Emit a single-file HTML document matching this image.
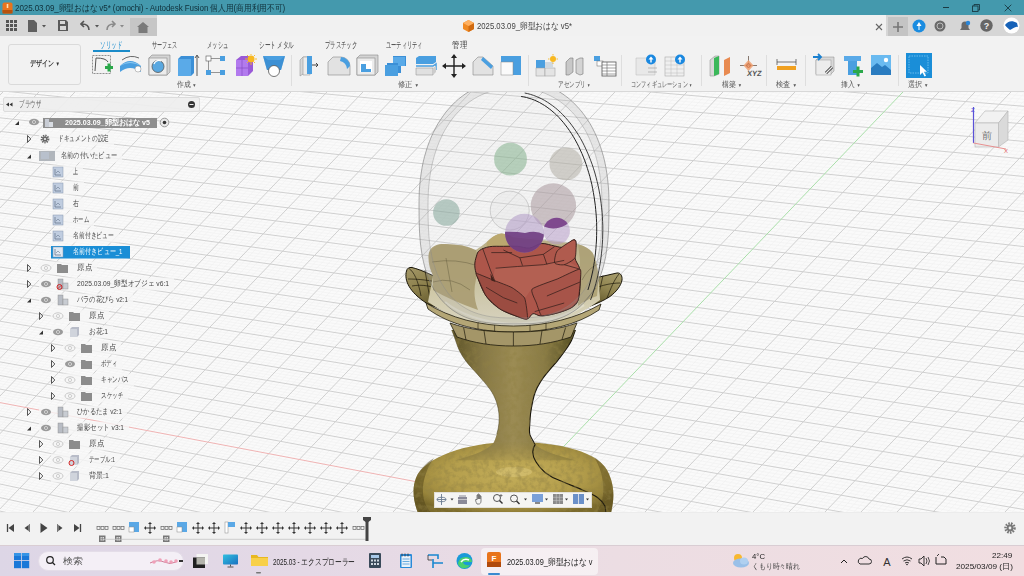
<!DOCTYPE html>
<html><head><meta charset="utf-8">
<style>
*{margin:0;padding:0;box-sizing:border-box}
html,body{width:1024px;height:576px;overflow:hidden;background:#f8f8f8;font-family:"Liberation Sans",sans-serif;color:#333}
.a{position:absolute}
.t{white-space:nowrap;line-height:1;transform-origin:0 0}
.j{letter-spacing:0}
</style></head><body>
<div class="a" style="left:0;top:91px;width:1024px;height:421px;background:#fafafa"></div>
<svg class="a" style="left:0;top:91px" width="1024" height="421" viewBox="0 91 1024 421">
<path d="M0 513.8L1024 740.9M0 508.4L1024 733.9M0 505.7L1024 730.4M0 503.0L1024 726.9M0 500.3L1024 723.4M0 494.8L1024 716.4M0 492.1L1024 712.9M0 489.4L1024 709.4M0 486.7L1024 705.9M0 481.3L1024 698.9M0 478.6L1024 695.4M0 475.9L1024 691.8M0 473.2L1024 688.3M0 467.7L1024 681.3M0 465.0L1024 677.8M0 462.3L1024 674.3M0 459.6L1024 670.8M0 454.2L1024 663.8M0 451.4L1024 660.3M0 448.7L1024 656.8M0 446.0L1024 653.3M0 440.6L1024 646.3M0 437.9L1024 642.8M0 435.2L1024 639.3M0 432.5L1024 635.8M0 427.0L1024 628.7M0 424.3L1024 625.2M0 421.6L1024 621.7M0 418.9L1024 618.2M0 413.5L1024 611.2M0 410.8L1024 607.7M0 408.0L1024 604.2M0 405.3L1024 600.7M0 399.9L1024 593.7M0 397.2L1024 590.2M0 394.5L1024 586.7M0 391.8L1024 583.2M0 386.3L1024 576.1M0 383.6L1024 572.6M0 380.9L1024 569.1M0 378.2L1024 565.6M0 372.8L1024 558.6M0 370.1L1024 555.1M0 367.4L1024 551.6M0 364.7L1024 548.1M0 359.2L1024 541.1M0 356.5L1024 537.6M0 353.8L1024 534.1M0 351.1L1024 530.6M0 345.7L1024 523.6M0 343.0L1024 520.1M0 340.2L1024 516.5M0 337.5L1024 513.0M0 332.1L1024 506.0M0 329.4L1024 502.5M0 326.7L1024 499.0M0 324.0L1024 495.5M0 318.5L1024 488.5M0 315.8L1024 485.0M0 313.1L1024 481.5M0 310.4L1024 478.0M0 305.0L1024 471.0M0 302.3L1024 467.5M0 299.5L1024 464.0M0 296.8L1024 460.4M0 291.4L1024 453.4M0 288.7L1024 449.9M0 286.0L1024 446.4M0 283.3L1024 442.9M0 277.8L1024 435.9M0 275.1L1024 432.4M0 272.4L1024 428.9M0 269.7L1024 425.4M0 264.3L1024 418.4M0 261.6L1024 414.9M0 258.9L1024 411.4M0 256.2L1024 407.9M0 250.7L1024 400.8M0 248.0L1024 397.3M0 245.3L1024 393.8M0 242.6L1024 390.3M0 237.2L1024 383.3M0 234.4L1024 379.8M0 231.7L1024 376.3M0 229.0L1024 372.8M0 223.6L1024 365.8M0 220.9L1024 362.3M0 218.2L1024 358.8M0 215.5L1024 355.3M0 210.0L1024 348.3M0 207.3L1024 344.7M0 204.6L1024 341.2M0 201.9L1024 337.7M0 196.5L1024 330.7M0 193.8L1024 327.2M0 191.1L1024 323.7M0 188.3L1024 320.2M0 182.9L1024 313.2M0 180.2L1024 309.7M0 177.5L1024 306.2M0 174.8L1024 302.7M0 169.4L1024 295.7M0 166.6L1024 292.2M0 163.9L1024 288.6M0 161.2L1024 285.1M0 155.8L1024 278.1M0 153.1L1024 274.6M0 150.4L1024 271.1M0 147.6L1024 267.6M0 142.2L1024 260.6M0 139.5L1024 257.1M0 136.8L1024 253.6M0 134.1L1024 250.1M0 128.7L1024 243.1M0 126.0L1024 239.6M0 123.2L1024 236.1M0 120.5L1024 232.6M0 115.1L1024 225.5M0 112.4L1024 222.0M0 109.7L1024 218.5M0 107.0L1024 215.0M0 101.5L1024 208.0M0 98.8L1024 204.5M0 96.1L1024 201.0M0 93.4L1024 197.5M0 88.0L1024 190.5M0 85.3L1024 187.0M0 82.5L1024 183.5M0 79.8L1024 180.0M0 74.4L1024 172.9M0 71.7L1024 169.4M0 69.0L1024 165.9M0 66.3L1024 162.4M0 60.9L1024 155.4M0 58.1L1024 151.9M0 55.4L1024 148.4M0 52.7L1024 144.9M0 47.3L1024 137.9M0 44.6L1024 134.4M0 41.9L1024 130.9M0 39.1L1024 127.4M0 33.7L1024 120.4M0 31.0L1024 116.8M0 28.3L1024 113.3M0 25.6L1024 109.8M0 20.2L1024 102.8M0 17.5L1024 99.3M0 14.7L1024 95.8M0 12.0L1024 92.3M11.1 91L-391.8 512M18.3 91L-384.6 512M25.5 91L-377.4 512M32.7 91L-370.2 512M47.1 91L-355.8 512M54.3 91L-348.6 512M61.5 91L-341.4 512M68.7 91L-334.2 512M83.1 91L-319.8 512M90.3 91L-312.6 512M97.5 91L-305.4 512M104.7 91L-298.2 512M119.1 91L-283.8 512M126.3 91L-276.6 512M133.5 91L-269.4 512M140.7 91L-262.2 512M155.1 91L-247.8 512M162.3 91L-240.6 512M169.5 91L-233.4 512M176.7 91L-226.2 512M191.1 91L-211.8 512M198.3 91L-204.6 512M205.5 91L-197.4 512M212.7 91L-190.2 512M227.1 91L-175.8 512M234.3 91L-168.6 512M241.5 91L-161.4 512M248.7 91L-154.2 512M263.1 91L-139.8 512M270.3 91L-132.6 512M277.5 91L-125.4 512M284.7 91L-118.2 512M299.1 91L-103.8 512M306.3 91L-96.6 512M313.5 91L-89.4 512M320.7 91L-82.2 512M335.1 91L-67.8 512M342.3 91L-60.6 512M349.5 91L-53.4 512M356.7 91L-46.2 512M371.1 91L-31.8 512M378.3 91L-24.6 512M385.5 91L-17.4 512M392.7 91L-10.2 512M407.1 91L4.2 512M414.3 91L11.4 512M421.5 91L18.6 512M428.7 91L25.8 512M443.1 91L40.2 512M450.3 91L47.4 512M457.5 91L54.6 512M464.7 91L61.8 512M479.1 91L76.2 512M486.3 91L83.4 512M493.5 91L90.6 512M500.7 91L97.8 512M515.1 91L112.2 512M522.3 91L119.4 512M529.5 91L126.6 512M536.7 91L133.8 512M551.1 91L148.2 512M558.3 91L155.4 512M565.5 91L162.6 512M572.7 91L169.8 512M587.1 91L184.2 512M594.3 91L191.4 512M601.5 91L198.6 512M608.7 91L205.8 512M623.1 91L220.2 512M630.3 91L227.4 512M637.5 91L234.6 512M644.7 91L241.8 512M659.1 91L256.2 512M666.3 91L263.4 512M673.5 91L270.6 512M680.7 91L277.8 512M695.1 91L292.2 512M702.3 91L299.4 512M709.5 91L306.6 512M716.7 91L313.8 512M731.1 91L328.2 512M738.3 91L335.4 512M745.5 91L342.6 512M752.7 91L349.8 512M767.1 91L364.2 512M774.3 91L371.4 512M781.5 91L378.6 512M788.7 91L385.8 512M803.1 91L400.2 512M810.3 91L407.4 512M817.5 91L414.6 512M824.7 91L421.8 512M839.1 91L436.2 512M846.3 91L443.4 512M853.5 91L450.6 512M860.7 91L457.8 512M875.1 91L472.2 512M882.3 91L479.4 512M889.5 91L486.6 512M896.7 91L493.8 512M911.1 91L508.2 512M918.3 91L515.4 512M925.5 91L522.6 512M932.7 91L529.8 512M947.1 91L544.2 512M954.3 91L551.4 512M961.5 91L558.6 512M968.7 91L565.8 512M983.1 91L580.2 512M990.3 91L587.4 512M997.5 91L594.6 512M1004.7 91L601.8 512M1019.1 91L616.2 512M1026.3 91L623.4 512M1033.5 91L630.6 512M1040.7 91L637.8 512M1055.1 91L652.2 512M1062.3 91L659.4 512M1069.5 91L666.6 512M1076.7 91L673.8 512M1091.1 91L688.2 512M1098.3 91L695.4 512M1105.5 91L702.6 512M1112.7 91L709.8 512M1127.1 91L724.2 512M1134.3 91L731.4 512M1141.5 91L738.6 512M1148.7 91L745.8 512M1163.1 91L760.2 512M1170.3 91L767.4 512M1177.5 91L774.6 512M1184.7 91L781.8 512M1199.1 91L796.2 512M1206.3 91L803.4 512M1213.5 91L810.6 512M1220.7 91L817.8 512M1235.1 91L832.2 512M1242.3 91L839.4 512M1249.5 91L846.6 512M1256.7 91L853.8 512M1271.1 91L868.2 512M1278.3 91L875.4 512M1285.5 91L882.6 512M1292.7 91L889.8 512M1307.1 91L904.2 512M1314.3 91L911.4 512M1321.5 91L918.6 512M1328.7 91L925.8 512M1343.1 91L940.2 512M1350.3 91L947.4 512M1357.5 91L954.6 512M1364.7 91L961.8 512M1379.1 91L976.2 512M1386.3 91L983.4 512M1393.5 91L990.6 512M1400.7 91L997.8 512M1415.1 91L1012.2 512M1422.3 91L1019.4 512" stroke="#f0f0f0" stroke-width="0.6" fill="none"/>
<path d="M0 511.1L1024 737.4M0 497.6L1024 719.9M0 484.0L1024 702.4M0 470.4L1024 684.8M0 456.9L1024 667.3M0 443.3L1024 649.8M0 429.8L1024 632.2M0 416.2L1024 614.7M0 389.1L1024 579.7M0 375.5L1024 562.1M0 361.9L1024 544.6M0 348.4L1024 527.1M0 334.8L1024 509.5M0 321.2L1024 492.0M0 307.7L1024 474.5M0 294.1L1024 456.9M0 280.6L1024 439.4M0 267.0L1024 421.9M0 253.4L1024 404.3M0 239.9L1024 386.8M0 226.3L1024 369.3M0 212.8L1024 351.8M0 199.2L1024 334.2M0 185.6L1024 316.7M0 172.1L1024 299.2M0 158.5L1024 281.6M0 144.9L1024 264.1M0 131.4L1024 246.6M0 117.8L1024 229.0M0 104.2L1024 211.5M0 90.7L1024 194.0M0 77.1L1024 176.5M0 63.6L1024 158.9M0 50.0L1024 141.4M0 36.4L1024 123.9M0 22.9L1024 106.3M3.9 91L-399.0 512M39.9 91L-363.0 512M75.9 91L-327.0 512M111.9 91L-291.0 512M147.9 91L-255.0 512M183.9 91L-219.0 512M219.9 91L-183.0 512M255.9 91L-147.0 512M291.9 91L-111.0 512M327.9 91L-75.0 512M363.9 91L-39.0 512M399.9 91L-3.0 512M435.9 91L33.0 512M471.9 91L69.0 512M507.9 91L105.0 512M543.9 91L141.0 512M579.9 91L177.0 512M615.9 91L213.0 512M651.9 91L249.0 512M687.9 91L285.0 512M723.9 91L321.0 512M759.9 91L357.0 512M795.9 91L393.0 512M831.9 91L429.0 512M867.9 91L465.0 512M939.9 91L537.0 512M975.9 91L573.0 512M1011.9 91L609.0 512M1047.9 91L645.0 512M1083.9 91L681.0 512M1119.9 91L717.0 512M1155.9 91L753.0 512M1191.9 91L789.0 512M1227.9 91L825.0 512M1263.9 91L861.0 512M1299.9 91L897.0 512M1335.9 91L933.0 512M1371.9 91L969.0 512M1407.9 91L1005.0 512" stroke="#d0d0d0" stroke-width="1" fill="none"/>
<path d="M903.9 91L501.0 512" stroke="#aadfaa" stroke-width="1" fill="none"/>
<path d="M0 402.6L1024 597.2" stroke="#f0b4b4" stroke-width="1" fill="none"/>
</svg>
<svg class="a" style="left:0;top:91px" width="1024" height="421" viewBox="0 91 1024 421">
<defs>
 <radialGradient id="gBase" cx="0.5" cy="0.45" r="0.6">
  <stop offset="0" stop-color="#c4ae5a"/>
  <stop offset="0.55" stop-color="#b49e4c"/>
  <stop offset="0.85" stop-color="#9a863c"/>
  <stop offset="1" stop-color="#7a6a2c"/>
 </radialGradient>
 <filter id="fNoise" x="0" y="0" width="1" height="1" filterUnits="objectBoundingBox">
  <feTurbulence type="fractalNoise" baseFrequency="0.18" numOctaves="3" seed="7" result="n"/>
  <feColorMatrix in="n" type="matrix" values="0 0 0 0 0.28  0 0 0 0 0.22  0 0 0 0 0.06  0 0 0 -3 1.75"/>
 </filter>
 <linearGradient id="gMaskStem" x1="0" x2="0" y1="442" y2="468" gradientUnits="userSpaceOnUse">
  <stop offset="0" stop-color="#fff"/>
  <stop offset="1" stop-color="#000"/>
 </linearGradient>
 <mask id="mStem" maskUnits="userSpaceOnUse" x="400" y="300" width="230" height="220"><rect x="400" y="300" width="230" height="220" fill="url(#gMaskStem)"/></mask>
 <clipPath id="cGold">
  <path d="M418 513 C413 500 412 488 416 478 C425 456 470 442 514 442 C560 442 601 452 609 474 C615 488 614 500 611 513 Z"/>
  <path d="M451.7 330.0C452.4 331.7 454.3 336.9 455.6 340.4C456.9 343.9 457.8 347.4 459.5 350.8C461.3 354.3 463.4 357.8 466.0 361.2C468.6 364.7 472.1 368.2 475.2 371.7C478.2 375.1 481.4 378.6 484.3 382.1C487.1 385.6 490.0 389.0 492.1 392.5C494.2 396.0 495.6 399.4 496.8 402.9C497.9 406.4 498.5 409.9 498.9 413.3C499.2 416.8 499.2 420.3 498.9 423.8C498.5 427.2 497.9 430.7 496.8 434.2C495.6 437.6 495.0 441.5 492.1 444.6C489.1 447.6 485.1 449.8 479.1 452.4C473.0 455.0 459.5 458.9 455.6 460.2L575.4 460.2C571.1 458.9 556.1 455.0 549.4 452.4C542.6 449.8 538.3 447.6 535.1 444.6C531.8 441.5 530.7 437.6 529.8 434.2C529.0 430.7 529.7 427.2 529.8 423.8C530.0 420.3 530.2 416.8 530.6 413.3C531.1 409.9 531.7 406.4 532.4 402.9C533.2 399.4 533.8 396.0 535.1 392.5C536.4 389.0 538.1 385.6 540.3 382.1C542.4 378.6 545.3 375.1 548.1 371.7C550.9 368.2 554.4 364.7 557.2 361.2C560.0 357.8 562.6 354.3 565.0 350.8C567.4 347.4 569.8 343.9 571.5 340.4C573.2 336.9 574.8 331.7 575.4 330.0Z"/>
 </clipPath>
 <linearGradient id="gStem" x1="452" x2="574" y1="0" y2="0" gradientUnits="userSpaceOnUse">
  <stop offset="0" stop-color="#5e5428"/>
  <stop offset="0.25" stop-color="#867846"/>
  <stop offset="0.5" stop-color="#9c8c54"/>
  <stop offset="0.75" stop-color="#8a7c46"/>
  <stop offset="1" stop-color="#565024"/>
 </linearGradient>
 <linearGradient id="gFlare" x1="0" x2="0" y1="430" y2="476" gradientUnits="userSpaceOnUse">
  <stop offset="0" stop-color="#b8a050" stop-opacity="0"/>
  <stop offset="1" stop-color="#c4ac56" stop-opacity="1"/>
 </linearGradient>
 <linearGradient id="gCup" x1="0" x2="0" y1="0" y2="1">
  <stop offset="0" stop-color="#b4a466"/>
  <stop offset="1" stop-color="#8a7a40"/>
 </linearGradient>
 <linearGradient id="gPetalL" x1="0" x2="0.5" y1="0" y2="1">
  <stop offset="0" stop-color="#a49868"/>
  <stop offset="0.5" stop-color="#8a7e4a"/>
  <stop offset="1" stop-color="#5a5026"/>
 </linearGradient>
 <linearGradient id="gPetalR" x1="1" x2="0.5" y1="0" y2="1">
  <stop offset="0" stop-color="#aaa070"/>
  <stop offset="0.5" stop-color="#908450"/>
  <stop offset="1" stop-color="#5e5428"/>
 </linearGradient>
 <linearGradient id="gDish" x1="0" x2="0" y1="0" y2="1">
  <stop offset="0" stop-color="#b8ac80"/>
  <stop offset="0.5" stop-color="#ccc4a0"/>
  <stop offset="1" stop-color="#dcd8c4"/>
 </linearGradient>
 <radialGradient id="gRose" cx="0.45" cy="0.4" r="0.6">
  <stop offset="0" stop-color="#c05a4a"/>
  <stop offset="1" stop-color="#a84c3e"/>
 </radialGradient>
</defs>
<!-- BASE -->
<path d="M418 513 C413 500 412 488 416 478 C425 456 470 442 514 442 C560 442 601 452 609 474 C615 488 614 500 611 513 Z" fill="url(#gBase)"/>
<path d="M418 513 C413 500 412 488 416 478 C419 470 426 463 434 458 C424 472 421 488 424 500 C426 507 429 511 432 513 Z" fill="#4e4218" opacity="0.5"/>
<path d="M611 513 C614 500 615 488 609 474 C606 467 600 461 594 457 C603 471 605 488 602 500 C600 507 598 511 596 513 Z" fill="#4e4218" opacity="0.4"/>
<!-- STEM -->
<path d="M451.7 330.0C452.4 331.7 454.3 336.9 455.6 340.4C456.9 343.9 457.8 347.4 459.5 350.8C461.3 354.3 463.4 357.8 466.0 361.2C468.6 364.7 472.1 368.2 475.2 371.7C478.2 375.1 481.4 378.6 484.3 382.1C487.1 385.6 490.0 389.0 492.1 392.5C494.2 396.0 495.6 399.4 496.8 402.9C497.9 406.4 498.5 409.9 498.9 413.3C499.2 416.8 499.2 420.3 498.9 423.8C498.5 427.2 497.9 430.7 496.8 434.2C495.6 437.6 495.0 441.5 492.1 444.6C489.1 447.6 485.1 449.8 479.1 452.4C473.0 455.0 459.5 458.9 455.6 460.2L575.4 460.2C571.1 458.9 556.1 455.0 549.4 452.4C542.6 449.8 538.3 447.6 535.1 444.6C531.8 441.5 530.7 437.6 529.8 434.2C529.0 430.7 529.7 427.2 529.8 423.8C530.0 420.3 530.2 416.8 530.6 413.3C531.1 409.9 531.7 406.4 532.4 402.9C533.2 399.4 533.8 396.0 535.1 392.5C536.4 389.0 538.1 385.6 540.3 382.1C542.4 378.6 545.3 375.1 548.1 371.7C550.9 368.2 554.4 364.7 557.2 361.2C560.0 357.8 562.6 354.3 565.0 350.8C567.4 347.4 569.8 343.9 571.5 340.4C573.2 336.9 574.8 331.7 575.4 330.0Z" fill="url(#gStem)" mask="url(#mStem)"/>
<ellipse cx="514" cy="472" rx="18" ry="5" fill="#e0cc80" opacity="0.45"/>
<path d="M451.7 330.0C452.4 331.7 454.3 336.9 455.6 340.4C456.9 343.9 457.8 347.4 459.5 350.8C461.3 354.3 463.4 357.8 466.0 361.2C468.6 364.7 472.1 368.2 475.2 371.7C478.2 375.1 481.4 378.6 484.3 382.1C487.1 385.6 490.0 389.0 492.1 392.5C494.2 396.0 495.6 399.4 496.8 402.9C497.9 406.4 498.5 409.9 498.9 413.3C499.2 416.8 499.2 420.3 498.9 423.8C498.5 427.2 497.9 430.7 496.8 434.2" stroke="#3a3214" stroke-width="0.8" fill="none" opacity="0.6"/>
<path d="M575.4 330.0C574.8 331.7 573.2 336.9 571.5 340.4C569.8 343.9 567.4 347.4 565.0 350.8C562.6 354.3 560.0 357.8 557.2 361.2C554.4 364.7 550.9 368.2 548.1 371.7C545.3 375.1 542.4 378.6 540.3 382.1C538.1 385.6 536.4 389.0 535.1 392.5C533.8 396.0 533.2 399.4 532.4 402.9C531.7 406.4 531.1 409.9 530.6 413.3C530.2 416.8 530.0 420.3 529.8 423.8C529.7 427.2 529.0 430.7 529.8 434.2C530.7 437.6 534.2 442.8 535.1 444.6C530 452 534 462 545 472.5 C552 478 558 480 561 481 C570 485 576 487 582.5 490 C590 493 594 495 597.5 497.5 C602 501 604 504 605 506 L606 513" stroke="#1a160c" stroke-width="1.1" fill="none"/>
<rect x="405" y="325" width="215" height="190" filter="url(#fNoise)" clip-path="url(#cGold)" opacity="0.45"/>
<!-- OUTER PETALS -->
<path d="M406.5 271 C404 280 409 292 427 303.5 L450 313 L446 282 C434 276 422 270 412 267.5 C409 267 407 268.5 406.5 271 Z" fill="url(#gPetalL)" stroke="#1a160a" stroke-width="1"/>
<path d="M409 268.5 C414 272 418 280 421 296 M412 286 C422 284 434 286 444 292 M425 270.5 L430 299 M408 279 C418 279 430 280 445 284" stroke="#1e1a0c" stroke-width="0.7" fill="none"/>
<path d="M586 280 L617 273 C620.5 272.5 622.5 276 622 280 C621 286 616 292 610 296.5 C604 300.5 597 303.5 588 307 L580 308 Z" fill="url(#gPetalR)" stroke="#1a160a" stroke-width="1"/>
<path d="M619 274 C614 280 611 288 607 298 M620 283 C610 283 598 286 586 292 M603 275.5 L597 302" stroke="#1e1a0c" stroke-width="0.7" fill="none"/>
<!-- DISH (inner petals) -->
<path d="M428 302 L433 275.6 Q428 262 429 252.7 Q434 245 441.7 244.3 L462.5 245.4 Q470 247 475 250.6 Q485 244 489.5 239.5 Q496 234 501.7 233.5 Q508 234 512 237 L560 242 Q570 243 578 244.3 Q588 247 592.5 252.7 Q597 262 598.75 277.7 L600 300 Q560 330 514 330 Q468 330 428 302z" fill="url(#gDish)"/>
<path d="M428.5 256 C429 248 434 244.5 442 244 C455 243.5 466 245.5 476 250 L480 268 Q470 290 478 310 Q450 300 433 290 L433 275.6 Q428 266 428.5 256z" fill="#a89a6c" opacity="0.9"/>
<path d="M487 242 Q494 234 501.7 233.5 Q510 234 514 239 L512 250 L486 250z" fill="#bca86a"/>
<path d="M578 244.3 Q588 247 592.5 252.7 Q597 262 598.75 277.7 L597 296 Q585 300 578 306 L580 260z" fill="#aa9e70" opacity="0.85"/>
<path d="M432 262 Q456 258 478 266 M446 258 L452 292 M433 282 Q452 276 470 290 M598 264 Q588 268 582 280 M596 288 L584 302" stroke="#5e5636" stroke-width="0.6" fill="none" opacity="0.8"/>
<path d="M445 302 Q470 322 514 324 Q560 322 584 305" stroke="#f0f0e8" stroke-width="2.2" fill="none" opacity="0.4"/>
<!-- FLANGE + BAND -->
<path d="M426 303 C450 318 480 326 513.5 326 C547 326 577 318 601 304 L599 310 C577 325 547 332 513.5 332 C480 332 450 325 428 309 Z" fill="#b4a676" stroke="#1e1a0c" stroke-width="0.8"/>
<path d="M478 322.5v8M494.6 325v6.5M530 325v6.5M546 322.5v8" stroke="#1e1a0c" stroke-width="0.6"/>
<path d="M450 323 C470 330 490 332 513.5 332 C537 332 557 330 577 323 L571 337 C553 343 535 346 513.5 346 C492 346 474 343 457 337 Z" fill="#a49668" stroke="#1e1a0c" stroke-width="0.8"/>
<path d="M463.6 327.5L466 340M484 330.5L486 344M513.4 332V346M542 330.5L540 344M565.6 327.5L562 339.5" stroke="#1e1a0c" stroke-width="0.7"/>
<!-- ROSE -->
<path d="M476.5 256.1C475.7 258.6 474.6 262.1 474.8 265.6C474.9 269.1 475.5 271.8 477.4 276.9C479.3 282.0 482.3 290.7 486.1 296.0C489.8 301.4 494.7 305.6 500.0 309.0C505.2 312.5 512.7 314.9 517.3 316.5C521.9 318.2 524.8 319.4 527.4 318.9C530.0 318.5 530.6 314.2 533.0 313.7C535.3 313.2 537.6 316.1 541.6 316.0C545.7 315.9 552.4 314.4 557.3 313.0C562.2 311.7 567.7 309.9 571.2 307.8C574.6 305.7 576.6 304.6 578.1 300.3C579.6 296.1 580.0 287.5 580.2 282.1C580.4 276.8 580.4 272.3 579.5 268.2C578.6 264.2 575.6 262.1 575.0 257.8C574.4 253.5 576.4 245.5 576.0 242.5C575.7 239.6 575.0 239.3 572.9 240.1C570.8 240.8 566.4 246.0 563.4 247.0C560.3 248.0 558.3 246.6 554.7 246.0C551.0 245.4 545.8 243.2 541.6 243.5C537.4 243.9 533.5 247.6 529.5 248.1C525.4 248.5 521.7 246.6 517.3 246.3C513.0 246.0 508.1 246.3 503.4 246.3C498.8 246.4 493.5 246.0 489.5 246.7C485.5 247.4 481.6 248.9 479.5 250.5C477.3 252.1 477.3 253.5 476.5 256.1Z" fill="#ad4f42" stroke="#2a120e" stroke-width="1"/>
<path d="M494.7 280.7C493.4 279.1 493.7 269.4 495.6 268.2C497.5 267.0 513.3 266.8 517.3 266.5C521.3 266.2 539.5 265.2 543.4 264.7C547.3 264.2 561.2 260.0 564.2 260.4C567.3 260.8 580.4 267.5 579.9 269.1C579.3 270.6 561.3 277.3 557.3 279.0C553.3 280.6 534.8 287.5 532.1 289.1C529.4 290.7 526.3 298.2 524.6 298.1C523.0 298.0 514.6 289.1 512.1 287.7C509.6 286.2 496.1 282.3 494.7 280.7Z" fill="#b55a4b" opacity="0.9"/>
<path d="M476.5 273.4C477.9 273.7 491.8 279.5 494.7 280.7C497.7 281.9 509.6 286.2 512.1 287.7C514.6 289.1 523.3 295.5 524.6 298.1C525.9 300.7 528.0 317.4 527.4 318.9C526.8 320.5 519.6 317.3 517.3 316.5C515.0 315.7 502.6 310.7 500.0 309.0C497.3 307.3 487.9 298.7 486.1 296.0C484.2 293.3 478.2 278.8 477.4 276.9C476.6 275.0 475.1 273.1 476.5 273.4Z" fill="#9a4438" stroke="#2a120e" stroke-width="0.8"/>
<path d="M532.1 289.1C533.8 287.1 553.3 280.6 557.3 279.0C561.3 277.3 577.9 268.8 579.9 269.1C581.8 269.3 580.3 279.5 580.2 282.1C580.1 284.7 578.9 298.2 578.1 300.3C577.4 302.5 572.9 306.8 571.2 307.8C569.4 308.9 559.7 312.4 557.3 313.0C554.8 313.7 543.4 316.3 541.6 315.5C539.9 314.6 537.2 305.2 536.4 303.0C535.6 300.8 530.3 291.1 532.1 289.1Z" fill="#a64c40" stroke="#2a120e" stroke-width="0.8"/>
<path d="M557.3 250.8C559.1 248.6 571.0 240.9 572.9 240.1C574.8 239.2 575.8 240.7 576.0 242.5C576.2 244.3 576.2 255.6 575.0 257.8C573.8 260.0 566.3 264.2 564.2 264.7C562.2 265.3 555.4 264.4 554.7 263.0C554.0 261.6 555.4 253.1 557.3 250.8Z" fill="#b05446" stroke="#2a120e" stroke-width="0.8"/>
<path d="M482.6 248.2L490.4 270.0L494.7 280.7" stroke="#2e1410" stroke-width="0.75" fill="none"/>
<path d="M503.4 250.0L519.9 257.8L543.4 254.3L554.7 246.5" stroke="#2e1410" stroke-width="0.75" fill="none"/>
<path d="M495.6 268.2L517.3 266.5L543.4 264.7L564.2 260.4" stroke="#2e1410" stroke-width="0.75" fill="none"/>
<path d="M519.9 257.8L522.5 265.6" stroke="#2e1410" stroke-width="0.75" fill="none"/>
<path d="M543.4 254.3L546.9 264.4" stroke="#2e1410" stroke-width="0.75" fill="none"/>
<path d="M486.1 287.3L503.4 297.7L517.3 303.0" stroke="#2e1410" stroke-width="0.75" fill="none"/>
<path d="M546.9 296.0L579.9 282.1" stroke="#2e1410" stroke-width="0.75" fill="none"/>
<path d="M491.3 252.6L512.1 252.6" stroke="#2e1410" stroke-width="0.75" fill="none"/>
<path d="M534.7 311.6L564.2 303.0" stroke="#2e1410" stroke-width="0.75" fill="none"/>
<path d="M564.2 264.7L579.9 269.1" stroke="#2e1410" stroke-width="0.75" fill="none"/>
<path d="M490.4 273.4L495.6 282.1L491.3 280.4Z" fill="#3a1810"/>
<!-- SPHERES -->
<clipPath id="cMauve"><circle cx="553.4" cy="205.9" r="22.7"/></clipPath>
<clipPath id="cPurp"><circle cx="524.5" cy="233.3" r="19.5"/></clipPath>
<circle cx="510.5" cy="159.2" r="16.4" fill="#80b088" opacity="0.55"/>
<circle cx="565.9" cy="163.9" r="16.4" fill="#aca89c" opacity="0.5"/>
<circle cx="446.4" cy="212.5" r="13.3" fill="#80a498" opacity="0.55"/>
<circle cx="509.7" cy="210.6" r="19.5" fill="#e0e0e0" fill-opacity="0.25" stroke="#b8b8b8" stroke-width="0.8" stroke-opacity="0.8"/>
<circle cx="553.4" cy="205.9" r="22.7" fill="#a8969a" opacity="0.55"/>
<circle cx="556.6" cy="231" r="13.3" fill="#b89ccc" opacity="0.55"/>
<circle cx="556.6" cy="231" r="13.3" fill="#6e2e80" opacity="0.85" clip-path="url(#cMauve)"/>
<circle cx="524.5" cy="233.3" r="19.5" fill="#b098c8" opacity="0.55"/>
<path d="M500 232 Q515 231 525 233 Q540 229 548 238 L548 256 L500 256z" fill="#642a78" opacity="0.85" clip-path="url(#cPurp)"/>
<!-- DOME -->
<path d="M609.0 205.0L608.9 218.0L608.7 226.2L608.4 233.4L607.9 239.8L607.3 245.7L606.5 251.2L605.7 256.4L604.6 261.4L603.5 266.1L602.2 270.5L600.8 274.8L599.2 278.9L597.5 282.7L595.7 286.4L593.7 289.9L591.6 293.2L589.3 296.4L587.0 299.4L584.4 302.2L581.8 304.8L579.0 307.3L576.1 309.6L573.0 311.7L569.7 313.7L566.3 315.5L562.8 317.1L559.0 318.5L555.1 319.8L550.9 320.9L546.5 321.9L541.8 322.6L536.6 323.2L531.0 323.7L524.3 323.9L514.0 324.0L503.7 323.9L497.0 323.7L491.4 323.2L486.2 322.6L481.5 321.9L477.1 320.9L472.9 319.8L469.0 318.5L465.2 317.1L461.7 315.5L458.3 313.7L455.0 311.7L451.9 309.6L449.0 307.3L446.2 304.8L443.6 302.2L441.0 299.4L438.7 296.4L436.4 293.2L434.3 289.9L432.3 286.4L430.5 282.7L428.8 278.9L427.2 274.8L425.8 270.5L424.5 266.1L423.4 261.4L422.3 256.4L421.5 251.2L420.7 245.7L420.1 239.8L419.6 233.4L419.3 226.2L419.1 218.0L419.0 205.0L419.1 197.6L419.3 191.0L419.8 184.9L420.4 178.9L421.2 173.1L422.1 167.5L423.2 162.0L424.5 156.7L426.0 151.5L427.6 146.5L429.4 141.6L431.3 136.9L433.4 132.3L435.6 127.9L438.0 123.6L440.6 119.6L443.3 115.7L446.1 111.9L449.1 108.4L452.2 105.1L455.4 101.9L458.7 98.9L462.2 96.2L465.8 93.6L469.5 91.3L473.4 89.2L477.3 87.3L481.3 85.6L485.5 84.1L489.8 82.9L494.2 81.8L498.7 81.0L503.4 80.5L508.3 80.1L514.0 80.0L519.7 80.1L524.6 80.5L529.3 81.0L533.8 81.8L538.2 82.9L542.5 84.1L546.7 85.6L550.7 87.3L554.6 89.2L558.5 91.3L562.2 93.6L565.8 96.2L569.3 98.9L572.6 101.9L575.8 105.1L578.9 108.4L581.9 111.9L584.7 115.7L587.4 119.6L590.0 123.6L592.4 127.9L594.6 132.3L596.7 136.9L598.6 141.6L600.4 146.5L602.0 151.5L603.5 156.7L604.8 162.0L605.9 167.5L606.8 173.1L607.6 178.9L608.2 184.9L608.7 191.0L608.9 197.6L609.0 205.0ZM602.0 206.0L601.9 217.2L601.7 224.8L601.4 231.3L601.0 237.3L600.4 242.8L599.7 248.0L598.8 252.9L597.9 257.6L596.8 262.1L595.5 266.3L594.2 270.4L592.7 274.3L591.1 278.0L589.4 281.6L587.5 284.9L585.5 288.1L583.4 291.2L581.2 294.1L578.8 296.8L576.3 299.3L573.7 301.7L570.9 304.0L568.1 306.0L565.0 307.9L561.9 309.7L558.6 311.3L555.1 312.7L551.5 313.9L547.6 315.0L543.6 315.9L539.3 316.7L534.7 317.2L529.6 317.7L523.7 317.9L515.0 318.0L506.3 317.9L500.4 317.7L495.3 317.2L490.7 316.7L486.4 315.9L482.4 315.0L478.5 313.9L474.9 312.7L471.4 311.3L468.1 309.7L465.0 307.9L461.9 306.0L459.1 304.0L456.3 301.7L453.7 299.3L451.2 296.8L448.8 294.1L446.6 291.2L444.5 288.1L442.5 284.9L440.6 281.6L438.9 278.0L437.3 274.3L435.8 270.4L434.5 266.3L433.2 262.1L432.1 257.6L431.2 252.9L430.3 248.0L429.6 242.8L429.0 237.3L428.6 231.3L428.3 224.8L428.1 217.2L428.0 206.0L428.1 199.0L428.3 192.8L428.7 187.0L429.3 181.4L430.0 175.9L430.9 170.6L431.9 165.4L433.1 160.4L434.4 155.5L435.9 150.8L437.5 146.2L439.3 141.7L441.2 137.4L443.2 133.2L445.4 129.2L447.8 125.4L450.2 121.7L452.8 118.2L455.5 114.8L458.4 111.7L461.3 108.7L464.4 105.9L467.6 103.3L470.9 100.9L474.3 98.7L477.8 96.7L481.4 94.9L485.1 93.3L488.9 91.9L492.8 90.7L496.8 89.7L501.0 89.0L505.3 88.4L509.8 88.1L515.0 88.0L520.2 88.1L524.7 88.4L529.0 89.0L533.2 89.7L537.2 90.7L541.1 91.9L544.9 93.3L548.6 94.9L552.2 96.7L555.7 98.7L559.1 100.9L562.4 103.3L565.6 105.9L568.7 108.7L571.6 111.7L574.5 114.8L577.2 118.2L579.8 121.7L582.2 125.4L584.6 129.2L586.8 133.2L588.8 137.4L590.7 141.7L592.5 146.2L594.1 150.8L595.6 155.5L596.9 160.4L598.1 165.4L599.1 170.6L600.0 175.9L600.7 181.4L601.3 187.0L601.7 192.8L601.9 199.0L602.0 206.0Z" fill="#a0a0a0" fill-opacity="0.16" fill-rule="evenodd"/>
<path d="M609.0 205.0L608.9 218.0L608.7 226.2L608.4 233.4L607.9 239.8L607.3 245.7L606.5 251.2L605.7 256.4L604.6 261.4L603.5 266.1L602.2 270.5L600.8 274.8L599.2 278.9L597.5 282.7L595.7 286.4L593.7 289.9L591.6 293.2L589.3 296.4L587.0 299.4L584.4 302.2L581.8 304.8L579.0 307.3L576.1 309.6L573.0 311.7L569.7 313.7L566.3 315.5L562.8 317.1L559.0 318.5L555.1 319.8L550.9 320.9L546.5 321.9L541.8 322.6L536.6 323.2L531.0 323.7L524.3 323.9L514.0 324.0L503.7 323.9L497.0 323.7L491.4 323.2L486.2 322.6L481.5 321.9L477.1 320.9L472.9 319.8L469.0 318.5L465.2 317.1L461.7 315.5L458.3 313.7L455.0 311.7L451.9 309.6L449.0 307.3L446.2 304.8L443.6 302.2L441.0 299.4L438.7 296.4L436.4 293.2L434.3 289.9L432.3 286.4L430.5 282.7L428.8 278.9L427.2 274.8L425.8 270.5L424.5 266.1L423.4 261.4L422.3 256.4L421.5 251.2L420.7 245.7L420.1 239.8L419.6 233.4L419.3 226.2L419.1 218.0L419.0 205.0L419.1 197.6L419.3 191.0L419.8 184.9L420.4 178.9L421.2 173.1L422.1 167.5L423.2 162.0L424.5 156.7L426.0 151.5L427.6 146.5L429.4 141.6L431.3 136.9L433.4 132.3L435.6 127.9L438.0 123.6L440.6 119.6L443.3 115.7L446.1 111.9L449.1 108.4L452.2 105.1L455.4 101.9L458.7 98.9L462.2 96.2L465.8 93.6L469.5 91.3L473.4 89.2L477.3 87.3L481.3 85.6L485.5 84.1L489.8 82.9L494.2 81.8L498.7 81.0L503.4 80.5L508.3 80.1L514.0 80.0L519.7 80.1L524.6 80.5L529.3 81.0L533.8 81.8L538.2 82.9L542.5 84.1L546.7 85.6L550.7 87.3L554.6 89.2L558.5 91.3L562.2 93.6L565.8 96.2L569.3 98.9L572.6 101.9L575.8 105.1L578.9 108.4L581.9 111.9L584.7 115.7L587.4 119.6L590.0 123.6L592.4 127.9L594.6 132.3L596.7 136.9L598.6 141.6L600.4 146.5L602.0 151.5L603.5 156.7L604.8 162.0L605.9 167.5L606.8 173.1L607.6 178.9L608.2 184.9L608.7 191.0L608.9 197.6L609.0 205.0Z" fill="#b8b8b8" fill-opacity="0.08" stroke="#7a7a7a" stroke-width="1" stroke-opacity="0.6"/>
<path d="M602.0 206.0L601.9 217.2L601.7 224.8L601.4 231.3L601.0 237.3L600.4 242.8L599.7 248.0L598.8 252.9L597.9 257.6L596.8 262.1L595.5 266.3L594.2 270.4L592.7 274.3L591.1 278.0L589.4 281.6L587.5 284.9L585.5 288.1L583.4 291.2L581.2 294.1L578.8 296.8L576.3 299.3L573.7 301.7L570.9 304.0L568.1 306.0L565.0 307.9L561.9 309.7L558.6 311.3L555.1 312.7L551.5 313.9L547.6 315.0L543.6 315.9L539.3 316.7L534.7 317.2L529.6 317.7L523.7 317.9L515.0 318.0L506.3 317.9L500.4 317.7L495.3 317.2L490.7 316.7L486.4 315.9L482.4 315.0L478.5 313.9L474.9 312.7L471.4 311.3L468.1 309.7L465.0 307.9L461.9 306.0L459.1 304.0L456.3 301.7L453.7 299.3L451.2 296.8L448.8 294.1L446.6 291.2L444.5 288.1L442.5 284.9L440.6 281.6L438.9 278.0L437.3 274.3L435.8 270.4L434.5 266.3L433.2 262.1L432.1 257.6L431.2 252.9L430.3 248.0L429.6 242.8L429.0 237.3L428.6 231.3L428.3 224.8L428.1 217.2L428.0 206.0L428.1 199.0L428.3 192.8L428.7 187.0L429.3 181.4L430.0 175.9L430.9 170.6L431.9 165.4L433.1 160.4L434.4 155.5L435.9 150.8L437.5 146.2L439.3 141.7L441.2 137.4L443.2 133.2L445.4 129.2L447.8 125.4L450.2 121.7L452.8 118.2L455.5 114.8L458.4 111.7L461.3 108.7L464.4 105.9L467.6 103.3L470.9 100.9L474.3 98.7L477.8 96.7L481.4 94.9L485.1 93.3L488.9 91.9L492.8 90.7L496.8 89.7L501.0 89.0L505.3 88.4L509.8 88.1L515.0 88.0L520.2 88.1L524.7 88.4L529.0 89.0L533.2 89.7L537.2 90.7L541.1 91.9L544.9 93.3L548.6 94.9L552.2 96.7L555.7 98.7L559.1 100.9L562.4 103.3L565.6 105.9L568.7 108.7L571.6 111.7L574.5 114.8L577.2 118.2L579.8 121.7L582.2 125.4L584.6 129.2L586.8 133.2L588.8 137.4L590.7 141.7L592.5 146.2L594.1 150.8L595.6 155.5L596.9 160.4L598.1 165.4L599.1 170.6L600.0 175.9L600.7 181.4L601.3 187.0L601.7 192.8L601.9 199.0L602.0 206.0Z" fill="none" stroke="#8a8a8a" stroke-width="0.8" stroke-opacity="0.5"/>
<path d="M521.1 96.5L523.8 96.9L526.5 97.5L529.1 98.3L531.8 99.1L534.4 100.1L537.0 101.3L539.5 102.5L542.1 104.0L544.6 105.5L547.1 107.2L549.5 109.0L551.9 110.9L554.3 113.0L556.6 115.1L558.9 117.4L561.1 119.9L563.3 122.4L565.4 125.1L567.5 127.8L569.5 130.7L571.5 133.7L573.4 136.7L575.2 139.9L577.0 143.2L578.7 146.5L580.3 150.0L581.9 153.5L583.4 157.1L584.8 160.8L586.2 164.6L587.4 168.4L588.6 172.3L589.8 176.3L590.8 180.3L591.8 184.3L592.6 188.5L593.4 192.6L594.1 196.8L594.7 201.0L595.3 205.3L595.7 209.6L596.1 213.9L596.4 218.2L596.6 222.6L596.7 226.9L596.7 231.3L596.6 235.6L596.5 240.0L596.2 244.3L595.9 248.6L595.5 252.9L595.0 257.2L594.4 261.5L593.7 265.7L593.0 269.8L592.1 274.0L591.2 278.1L590.2 282.1L589.1 286.1L587.9 290.0" stroke="#222" stroke-width="1" fill="none"/>
<path d="M524.7 93.0L527.6 93.6L530.5 94.4L533.3 95.3L536.2 96.4L539.0 97.6L541.8 98.9L544.6 100.4L547.3 102.1L550.0 103.9L552.7 105.8L555.3 107.8L557.9 110.0L560.4 112.3L562.9 114.8L565.3 117.4L567.7 120.1L570.0 122.9L572.2 125.8L574.4 128.9L576.5 132.0L578.6 135.3L580.6 138.6L582.5 142.1L584.3 145.7L586.0 149.3L587.7 153.1L589.3 156.9L590.8 160.8L592.3 164.8L593.6 168.8L594.9 173.0L596.0 177.1L597.1 181.4L598.1 185.7L599.0 190.0L599.8 194.4L600.5 198.8L601.1 203.3L601.6 207.8L602.1 212.3L602.4 216.8L602.6 221.4L602.8 225.9L602.8 230.5L602.7 235.0L602.6 239.6L602.3 244.1L602.0 248.6L601.5 253.2L601.0 257.6L600.4 262.1L599.6 266.5L598.8 270.9L597.9 275.2L596.9 279.5L595.8 283.7L594.6 287.9L593.3 292.0L592.0 296.0L590.5 300.0" stroke="#2a2a2a" stroke-width="0.9" fill="none"/>
</svg>

<!-- NAV BAR -->
<div class="a" style="left:434px;top:492px;width:158px;height:16px;background:#f5f5f3;border:1px solid #e2e0d8"></div>
<svg class="a" style="left:434px;top:492px" width="158" height="16" viewBox="434 492 158 16">
 <g stroke="#6a7a90" fill="none" stroke-width="0.9">
  <path d="M441.5 494v11M437 499.5h9"/><ellipse cx="441.5" cy="499.5" rx="4.5" ry="2.2"/>
 </g>
 <g fill="#333"><path d="M450.5 498.5h3l-1.5 2z"/><path d="M524 498.5h3l-1.5 2z"/><path d="M545 498.5h3l-1.5 2z"/><path d="M565 498.5h3l-1.5 2z"/><path d="M586 498.5h3l-1.5 2z"/></g>
 <path d="M458 497h9v7h-9z" fill="#8a8a98"/><path d="M459 496h7" stroke="#8a8a98" stroke-width="1"/><path d="M458 499.5h9" stroke="#ddd" stroke-width="0.7"/>
 <path d="M477 504c-1-2-2-4-1-5l1 1v-5h1v4v-5h1v5v-4h1v4v-3h1v5c0 2-1 3-2 3z" fill="none" stroke="#666" stroke-width="0.8"/>
 <circle cx="497" cy="498" r="3.5" fill="none" stroke="#555" stroke-width="1"/><path d="M499.5 500.5l3 3" stroke="#333" stroke-width="1.4"/><path d="M501 494v3M499.5 495.5h3" stroke="#555" stroke-width="0.7"/>
 <circle cx="514" cy="498.5" r="3.5" fill="none" stroke="#555" stroke-width="1"/><path d="M516.5 501l3 3" stroke="#333" stroke-width="1.4"/>
 <rect x="532" y="494" width="11" height="8" fill="#7aa0d8"/><path d="M535 502h5v2h-5z" fill="#888"/>
 <rect x="553" y="494" width="10" height="10" fill="#8a8a8a"/><path d="M556.3 494v10M559.6 494v10M553 497.3h10M553 500.6h10" stroke="#ccc" stroke-width="0.5"/>
 <rect x="573" y="494" width="11" height="10" fill="#6a90c8"/><path d="M578.5 494v10" stroke="#eee" stroke-width="0.8"/>
</svg>
<!-- VIEWCUBE -->
<svg class="a" style="left:960px;top:100px" width="60" height="56" viewBox="960 100 60 56">
 <path d="M975 123L985 111H1008L998.5 123Z" fill="#f2f2f2" stroke="#b4b4b4" stroke-width="0.6"/>
 <path d="M998.5 123L1008 111V140L998.5 147Z" fill="#dadada" stroke="#b4b4b4" stroke-width="0.6"/>
 <rect x="975" y="123" width="23.5" height="24" fill="#ebebeb" stroke="#b4b4b4" stroke-width="0.6"/>
 <text x="986.7" y="139" font-size="10" font-family="Liberation Sans" fill="#777" text-anchor="middle">前</text>
 <path d="M973.5 143V107" stroke="#5a50d8" stroke-width="1.2"/>
 <path d="M973.5 143L1006 149" stroke="#e89090" stroke-width="1"/>
 <text x="971" y="112" font-size="6" font-family="Liberation Sans" fill="#5a50d8">Z</text>
 <text x="1004" y="153" font-size="6" font-family="Liberation Sans" fill="#e06060">X</text>
</svg>

<!-- BROWSER -->
<div class="a" style="left:3px;top:97px;width:197px;height:15px;background:rgba(238,238,238,0.92);border:1px solid #dcdcdc;border-radius:2px"></div>
<div class="a t w" style="left:19px;top:100px;font-size:8.5px;color:#666;transform:scaleX(0.786)"><span class="j">ブラウザ</span></div>
<svg class="a" style="left:0;top:0" width="200" height="500" viewBox="0 0 200 500">
<path d="M6 104.5l3-2v4zM9.5 104.5l3-2v4z" fill="#333"/><circle cx="191.5" cy="104.5" r="3.5" fill="#333"/><path d="M189.5 104.5h4" stroke="#eee" stroke-width="1"/>
<path d="M15 125h4v-4z" fill="#333"/>
<ellipse cx="34" cy="122" rx="5" ry="3.2" fill="#9a9a9a"/><circle cx="34" cy="122" r="1.8" fill="#eee"/><circle cx="34" cy="122" r="1" fill="#888"/>
<rect x="43" y="118" width="114" height="10" fill="#8e8e8e"/>
<rect x="45" y="119" width="4" height="8" fill="#c8ccd4"/><rect x="49" y="122" width="4" height="5" fill="#d8dce2"/>
<circle cx="164.5" cy="122.5" r="4.3" fill="#e8e8e8" stroke="#888" stroke-width="0.8"/><circle cx="164.5" cy="122.5" r="1.8" fill="#333"/>
<rect x="39" y="132.5" width="75" height="13" fill="#f6f6f6" opacity="0.8"/>
<rect x="37" y="149.5" width="85" height="13" fill="#f6f6f6" opacity="0.8"/>
<rect x="51" y="165.5" width="32" height="13" fill="#f6f6f6" opacity="0.8"/>
<rect x="51" y="181.5" width="33" height="13" fill="#f6f6f6" opacity="0.8"/>
<rect x="51" y="197.5" width="33" height="13" fill="#f6f6f6" opacity="0.8"/>
<rect x="51" y="213.5" width="43" height="13" fill="#f6f6f6" opacity="0.8"/>
<rect x="51" y="229.5" width="68" height="13" fill="#f6f6f6" opacity="0.8"/>
<rect x="51" y="245.5" width="76.5" height="13" fill="#f6f6f6" opacity="0.8"/>
<rect x="39" y="261.5" width="58" height="13" fill="#f6f6f6" opacity="0.8"/>
<rect x="39" y="277.5" width="135" height="13" fill="#f6f6f6" opacity="0.8"/>
<rect x="39" y="293.5" width="94" height="13" fill="#f6f6f6" opacity="0.8"/>
<rect x="51" y="309.5" width="58" height="13" fill="#f6f6f6" opacity="0.8"/>
<rect x="51" y="325.5" width="62" height="13" fill="#f6f6f6" opacity="0.8"/>
<rect x="63" y="341.5" width="58" height="13" fill="#f6f6f6" opacity="0.8"/>
<rect x="63" y="357.5" width="59" height="13" fill="#f6f6f6" opacity="0.8"/>
<rect x="63" y="373.5" width="71" height="13" fill="#f6f6f6" opacity="0.8"/>
<rect x="63" y="389.5" width="65" height="13" fill="#f6f6f6" opacity="0.8"/>
<rect x="39" y="405.5" width="88" height="13" fill="#f6f6f6" opacity="0.8"/>
<rect x="39" y="421.5" width="90" height="13" fill="#f6f6f6" opacity="0.8"/>
<rect x="51" y="437.5" width="58" height="13" fill="#f6f6f6" opacity="0.8"/>
<rect x="51" y="453.5" width="69" height="13" fill="#f6f6f6" opacity="0.8"/>
<rect x="51" y="469.5" width="63" height="13" fill="#f6f6f6" opacity="0.8"/>
<rect x="51" y="246" width="79" height="12.5" fill="#1a8ed6"/>
<path d="M27.5 135.5L30.8 139L27.5 142.5z" fill="none" stroke="#444" stroke-width="0.9"/>
<circle cx="45" cy="139" r="3.3" fill="none" stroke="#666" stroke-width="2.2" stroke-dasharray="1.3 0.9"/><circle cx="45" cy="139" r="2.6" fill="#666"/><circle cx="45" cy="139" r="1.1" fill="#eee"/>
<path d="M27 158.5L31 158.5L31 154.5z" fill="#333"/>
<rect x="39" y="151" width="16" height="10" fill="#9aa0a8" opacity="0.75"/><rect x="41" y="152" width="8" height="7" fill="#b8c0cc"/>
<rect x="53" y="167" width="10" height="10" fill="#c0cde0" stroke="#8898b0" stroke-width="0.5"/><path d="M55 169v6h6" stroke="#6a7a90" stroke-width="0.8" fill="none"/><path d="M56 173l2-2 2 2" stroke="#6a7a90" stroke-width="0.6" fill="none"/>
<rect x="53" y="183" width="10" height="10" fill="#c0cde0" stroke="#8898b0" stroke-width="0.5"/><path d="M55 185v6h6" stroke="#6a7a90" stroke-width="0.8" fill="none"/><path d="M56 189l2-2 2 2" stroke="#6a7a90" stroke-width="0.6" fill="none"/>
<rect x="53" y="199" width="10" height="10" fill="#c0cde0" stroke="#8898b0" stroke-width="0.5"/><path d="M55 201v6h6" stroke="#6a7a90" stroke-width="0.8" fill="none"/><path d="M56 205l2-2 2 2" stroke="#6a7a90" stroke-width="0.6" fill="none"/>
<rect x="53" y="215" width="10" height="10" fill="#c0cde0" stroke="#8898b0" stroke-width="0.5"/><path d="M55 217v6h6" stroke="#6a7a90" stroke-width="0.8" fill="none"/><path d="M56 221l2-2 2 2" stroke="#6a7a90" stroke-width="0.6" fill="none"/>
<rect x="53" y="231" width="10" height="10" fill="#c0cde0" stroke="#8898b0" stroke-width="0.5"/><path d="M55 233v6h6" stroke="#6a7a90" stroke-width="0.8" fill="none"/><path d="M56 237l2-2 2 2" stroke="#6a7a90" stroke-width="0.6" fill="none"/>
<rect x="53" y="247" width="10" height="10" fill="#dfe8f2" stroke="#8898b0" stroke-width="0.5"/><path d="M55 249v6h6" stroke="#6a7a90" stroke-width="0.8" fill="none"/><path d="M56 253l2-2 2 2" stroke="#6a7a90" stroke-width="0.6" fill="none"/>
<path d="M27.5 264.5L30.8 268L27.5 271.5z" fill="none" stroke="#444" stroke-width="0.9"/>
<ellipse cx="46" cy="268" rx="5" ry="3.2" fill="none" stroke="#c4c4c4" stroke-width="0.9"/><circle cx="46" cy="268" r="1.6" fill="none" stroke="#c4c4c4" stroke-width="0.8"/>
<path d="M57 264h4l1 1h6v8h-11z" fill="#8c8c8c"/>
<path d="M27.5 280.5L30.8 284L27.5 287.5z" fill="none" stroke="#444" stroke-width="0.9"/>
<ellipse cx="46" cy="284" rx="5" ry="3.2" fill="#9a9a9a"/><circle cx="46" cy="284" r="1.8" fill="#eee"/><circle cx="46" cy="284" r="1" fill="#888"/>
<rect x="58" y="279" width="5" height="10" fill="#b8bcc4" stroke="#888" stroke-width="0.4"/><rect x="63" y="283" width="5" height="6" fill="#c8ccd2" stroke="#888" stroke-width="0.4"/><circle cx="59.5" cy="287" r="2.5" fill="none" stroke="#d02020" stroke-width="1"/><path d="M58 288.5l3-3" stroke="#d02020" stroke-width="0.8"/>
<path d="M27 302.5L31 302.5L31 298.5z" fill="#333"/>
<ellipse cx="46" cy="300" rx="5" ry="3.2" fill="#9a9a9a"/><circle cx="46" cy="300" r="1.8" fill="#eee"/><circle cx="46" cy="300" r="1" fill="#888"/>
<rect x="58" y="295" width="5" height="10" fill="#b8bcc4" stroke="#888" stroke-width="0.4"/><rect x="63" y="299" width="5" height="6" fill="#c8ccd2" stroke="#888" stroke-width="0.4"/>
<path d="M39.5 312.5L42.8 316L39.5 319.5z" fill="none" stroke="#444" stroke-width="0.9"/>
<ellipse cx="58" cy="316" rx="5" ry="3.2" fill="none" stroke="#c4c4c4" stroke-width="0.9"/><circle cx="58" cy="316" r="1.6" fill="none" stroke="#c4c4c4" stroke-width="0.8"/>
<path d="M69 312h4l1 1h6v8h-11z" fill="#8c8c8c"/>
<path d="M39 334.5L43 334.5L43 330.5z" fill="#333"/>
<ellipse cx="58" cy="332" rx="5" ry="3.2" fill="#9a9a9a"/><circle cx="58" cy="332" r="1.8" fill="#eee"/><circle cx="58" cy="332" r="1" fill="#888"/>
<path d="M70 329l2-2h7v8l-2 2h-7z" fill="#b8bcc8"/><rect x="70" y="329" width="7" height="8" fill="#d0d4dc"/>
<path d="M51.5 344.5L54.8 348L51.5 351.5z" fill="none" stroke="#444" stroke-width="0.9"/>
<ellipse cx="70" cy="348" rx="5" ry="3.2" fill="none" stroke="#c4c4c4" stroke-width="0.9"/><circle cx="70" cy="348" r="1.6" fill="none" stroke="#c4c4c4" stroke-width="0.8"/>
<path d="M81 344h4l1 1h6v8h-11z" fill="#8c8c8c"/>
<path d="M51.5 360.5L54.8 364L51.5 367.5z" fill="none" stroke="#444" stroke-width="0.9"/>
<ellipse cx="70" cy="364" rx="5" ry="3.2" fill="#9a9a9a"/><circle cx="70" cy="364" r="1.8" fill="#eee"/><circle cx="70" cy="364" r="1" fill="#888"/>
<path d="M81 360h4l1 1h6v8h-11z" fill="#8c8c8c"/>
<path d="M51.5 376.5L54.8 380L51.5 383.5z" fill="none" stroke="#444" stroke-width="0.9"/>
<ellipse cx="70" cy="380" rx="5" ry="3.2" fill="none" stroke="#c4c4c4" stroke-width="0.9"/><circle cx="70" cy="380" r="1.6" fill="none" stroke="#c4c4c4" stroke-width="0.8"/>
<path d="M81 376h4l1 1h6v8h-11z" fill="#8c8c8c"/>
<path d="M51.5 392.5L54.8 396L51.5 399.5z" fill="none" stroke="#444" stroke-width="0.9"/>
<ellipse cx="70" cy="396" rx="5" ry="3.2" fill="none" stroke="#c4c4c4" stroke-width="0.9"/><circle cx="70" cy="396" r="1.6" fill="none" stroke="#c4c4c4" stroke-width="0.8"/>
<path d="M81 392h4l1 1h6v8h-11z" fill="#8c8c8c"/>
<path d="M27.5 408.5L30.8 412L27.5 415.5z" fill="none" stroke="#444" stroke-width="0.9"/>
<ellipse cx="46" cy="412" rx="5" ry="3.2" fill="#9a9a9a"/><circle cx="46" cy="412" r="1.8" fill="#eee"/><circle cx="46" cy="412" r="1" fill="#888"/>
<rect x="58" y="407" width="5" height="10" fill="#b8bcc4" stroke="#888" stroke-width="0.4"/><rect x="63" y="411" width="5" height="6" fill="#c8ccd2" stroke="#888" stroke-width="0.4"/>
<path d="M27 430.5L31 430.5L31 426.5z" fill="#333"/>
<ellipse cx="46" cy="428" rx="5" ry="3.2" fill="#9a9a9a"/><circle cx="46" cy="428" r="1.8" fill="#eee"/><circle cx="46" cy="428" r="1" fill="#888"/>
<rect x="58" y="423" width="5" height="10" fill="#b8bcc4" stroke="#888" stroke-width="0.4"/><rect x="63" y="427" width="5" height="6" fill="#c8ccd2" stroke="#888" stroke-width="0.4"/>
<path d="M39.5 440.5L42.8 444L39.5 447.5z" fill="none" stroke="#444" stroke-width="0.9"/>
<ellipse cx="58" cy="444" rx="5" ry="3.2" fill="none" stroke="#c4c4c4" stroke-width="0.9"/><circle cx="58" cy="444" r="1.6" fill="none" stroke="#c4c4c4" stroke-width="0.8"/>
<path d="M69 440h4l1 1h6v8h-11z" fill="#8c8c8c"/>
<path d="M39.5 456.5L42.8 460L39.5 463.5z" fill="none" stroke="#444" stroke-width="0.9"/>
<ellipse cx="58" cy="460" rx="5" ry="3.2" fill="none" stroke="#c4c4c4" stroke-width="0.9"/><circle cx="58" cy="460" r="1.6" fill="none" stroke="#c4c4c4" stroke-width="0.8"/>
<path d="M70 457l2-2h7v8l-2 2h-7z" fill="#b8bcc8"/><rect x="70" y="457" width="7" height="8" fill="#d0d4dc"/><circle cx="71.5" cy="463" r="2.5" fill="none" stroke="#d02020" stroke-width="1"/>
<path d="M39.5 472.5L42.8 476L39.5 479.5z" fill="none" stroke="#444" stroke-width="0.9"/>
<ellipse cx="58" cy="476" rx="5" ry="3.2" fill="none" stroke="#c4c4c4" stroke-width="0.9"/><circle cx="58" cy="476" r="1.6" fill="none" stroke="#c4c4c4" stroke-width="0.8"/>
<path d="M70 473l2-2h7v8l-2 2h-7z" fill="#b8bcc8"/><rect x="70" y="473" width="7" height="8" fill="#d0d4dc"/>
</svg>
<div class="a t w" style="left:65px;top:118.5px;font-size:8px;color:#fff;font-weight:bold;transform:scaleX(1.062)">2025.03.09_<span class="j">卵型おはな</span> v5</div>
<div class="a t w" style="left:58px;top:134.5px;font-size:8px;color:#444;transform:scaleX(0.944)"><span class="j">ドキュメントの設定</span></div>
<div class="a t w" style="left:61px;top:151.5px;font-size:8px;color:#444;transform:scaleX(1.037)"><span class="j">名前の付いたビュー</span></div>
<div class="a t w" style="left:73px;top:167.5px;font-size:8px;color:#444;transform:scaleX(0.833)"><span class="j">上</span></div>
<div class="a t w" style="left:73px;top:183.5px;font-size:8px;color:#444;transform:scaleX(1.000)"><span class="j">前</span></div>
<div class="a t w" style="left:73px;top:199.5px;font-size:8px;color:#444;transform:scaleX(1.000)"><span class="j">右</span></div>
<div class="a t w" style="left:73px;top:215.5px;font-size:8px;color:#444;transform:scaleX(0.889)"><span class="j">ホーム</span></div>
<div class="a t w" style="left:73px;top:231.5px;font-size:8px;color:#444;transform:scaleX(0.976)"><span class="j">名前付きビュー</span></div>
<div class="a t w" style="left:73px;top:247.5px;font-size:8px;color:#fff;transform:scaleX(0.990)"><span class="j">名前付きビュー</span>_1</div>
<div class="a t w" style="left:77px;top:263.5px;font-size:8px;color:#444;transform:scaleX(1.250)"><span class="j">原点</span></div>
<div class="a t w" style="left:77px;top:279.5px;font-size:8px;color:#444;transform:scaleX(1.000)">2025.03.09_<span class="j">卵型オブジェ</span> v6:1</div>
<div class="a t w" style="left:77px;top:295.5px;font-size:8px;color:#444;transform:scaleX(0.981)"><span class="j">バラの花びら</span> v2:1</div>
<div class="a t w" style="left:89px;top:311.5px;font-size:8px;color:#444;transform:scaleX(1.250)"><span class="j">原点</span></div>
<div class="a t w" style="left:89px;top:327.5px;font-size:8px;color:#444;transform:scaleX(1.056)"><span class="j">お花</span>:1</div>
<div class="a t w" style="left:101px;top:343.5px;font-size:8px;color:#444;transform:scaleX(1.250)"><span class="j">原点</span></div>
<div class="a t w" style="left:101px;top:359.5px;font-size:8px;color:#444;transform:scaleX(0.889)"><span class="j">ボディ</span></div>
<div class="a t w" style="left:101px;top:375.5px;font-size:8px;color:#444;transform:scaleX(0.933)"><span class="j">キャンバス</span></div>
<div class="a t w" style="left:101px;top:391.5px;font-size:8px;color:#444;transform:scaleX(0.917)"><span class="j">スケッチ</span></div>
<div class="a t w" style="left:77px;top:407.5px;font-size:8px;color:#444;transform:scaleX(0.978)"><span class="j">ひかるたま</span> v2:1</div>
<div class="a t w" style="left:77px;top:423.5px;font-size:8px;color:#444;transform:scaleX(1.022)"><span class="j">撮影セット</span> v3:1</div>
<div class="a t w" style="left:89px;top:439.5px;font-size:8px;color:#444;transform:scaleX(1.250)"><span class="j">原点</span></div>
<div class="a t w" style="left:89px;top:455.5px;font-size:8px;color:#444;transform:scaleX(0.867)"><span class="j">テーブル</span>:1</div>
<div class="a t w" style="left:89px;top:471.5px;font-size:8px;color:#444;transform:scaleX(1.111)"><span class="j">背景</span>:1</div>
<!-- TITLE BAR -->
<div class="a" style="left:0;top:0;width:1024px;height:15px;background:#4499ad"></div>
<svg class="a" style="left:2px;top:2px" width="11" height="12" viewBox="0 0 11 12"><rect x="0.5" y="0.5" width="10" height="11" rx="2" fill="#e8741c"/><rect x="0.5" y="8" width="10" height="3.5" fill="#b8520e"/><path d="M5.5 2v4" stroke="#ffe0b0" stroke-width="1.6"/></svg>
<div class="a t w" style="left:15px;top:3px;font-size:9.4px;color:#10303a;letter-spacing:-0.1px;transform:scaleX(0.939)">2025.03.09_<span class="j">卵型おはな</span> v5* (omochi) - Autodesk Fusion <span class="j">個人用</span>(<span class="j">商用利用不可</span>)</div>
<div class="a" style="left:943px;top:7px;width:6px;height:1px;background:#1a3a44"></div>
<svg class="a" style="left:972px;top:3.5px" width="8" height="8"><path d="M2 2V0.5h5.5V6H6" fill="none" stroke="#1a3a44" stroke-width="0.9"/><rect x="0.5" y="2" width="5.5" height="5.5" fill="none" stroke="#1a3a44" stroke-width="0.9"/></svg>
<svg class="a" style="left:1004px;top:3.5px" width="8" height="8"><path d="M0.7 0.7L7.3 7.3M7.3 0.7L0.7 7.3" stroke="#1a3a44" stroke-width="0.9"/></svg>

<!-- TAB ROW -->
<div class="a" style="left:0;top:15px;width:1024px;height:21px;background:#f1f1f1"></div>
<div class="a" style="left:0;top:15px;width:157px;height:21px;background:#d6d6d6"></div>
<div class="a" style="left:130px;top:18px;width:27px;height:18px;background:#c6c6c6"></div>
<div class="a" style="left:886px;top:15px;width:138px;height:21px;background:#d6d6d6"></div>
<div class="a" style="left:888px;top:17px;width:20px;height:19px;background:#c4c4c4"></div>
<!-- grid icon -->
<svg class="a" style="left:6px;top:20px" width="11" height="11"><g fill="#555"><rect x="0" y="0" width="3" height="3"/><rect x="4" y="0" width="3" height="3"/><rect x="8" y="0" width="3" height="3"/><rect x="0" y="4" width="3" height="3"/><rect x="4" y="4" width="3" height="3"/><rect x="8" y="4" width="3" height="3"/><rect x="0" y="8" width="3" height="3"/><rect x="4" y="8" width="3" height="3"/><rect x="8" y="8" width="3" height="3"/></g></svg>
<svg class="a" style="left:28px;top:20px" width="20" height="12"><path d="M0 0h6l3 3v9H0z" fill="#606060"/><path d="M14 5h4l-2 2.5z" fill="#555"/></svg>
<svg class="a" style="left:58px;top:20px" width="10" height="11"><path d="M0 0h8l2 2v9H0z" fill="#5a5a5a"/><rect x="2" y="1" width="5" height="3" fill="#d6d6d6"/><rect x="2" y="6" width="6" height="4" fill="#d6d6d6"/></svg>
<svg class="a" style="left:80px;top:20px" width="20" height="12"><path d="M9 10C9 5 6 4 2 4M4 1L1 4l3 3" stroke="#555" stroke-width="1.6" fill="none"/><path d="M15 5h4l-2 2.5z" fill="#555"/></svg>
<svg class="a" style="left:106px;top:20px" width="20" height="12"><path d="M1 10C1 5 4 4 8 4M6 1l3 3-3 3" stroke="#8a8a8a" stroke-width="1.6" fill="none"/><path d="M14 5h4l-2 2.5z" fill="#8a8a8a"/></svg>
<svg class="a" style="left:137px;top:22px" width="12" height="11"><path d="M6 0L0 5h1.5v6h9V5H12z" fill="#7a7a7a"/></svg>
<!-- doc tab -->
<svg class="a" style="left:463px;top:20px" width="11" height="12" viewBox="0 0 11 12"><path d="M5.5 0L11 3v6l-5.5 3L0 9V3z" fill="#f08a24"/><path d="M5.5 6L11 3v6l-5.5 3z" fill="#d06a10"/><path d="M0 3l5.5 3L11 3 5.5 0z" fill="#ffb060"/></svg>
<div class="a t w" style="left:477px;top:22px;font-size:9px;color:#444;transform:scaleX(0.922)">2025.03.09_<span class="j">卵型おはな</span> v5*</div>
<svg class="a" style="left:875px;top:23px" width="8" height="8"><path d="M1 1L7 7M7 1L1 7" stroke="#666" stroke-width="1.1"/></svg>
<svg class="a" style="left:893px;top:22px" width="10" height="10"><path d="M5 0v10M0 5h10" stroke="#777" stroke-width="1.6"/></svg>
<svg class="a" style="left:912px;top:19px" width="14" height="14"><circle cx="7" cy="7" r="6.5" fill="#1a8ce0"/><path d="M7 3L4.5 7H6.5v4H7.5V7h2z" fill="#fff"/></svg>
<svg class="a" style="left:934px;top:20px" width="12" height="12"><circle cx="6" cy="6" r="5.5" fill="#6a6a6a"/><circle cx="6" cy="6" r="3" fill="none" stroke="#bbb" stroke-width="1"/></svg>
<svg class="a" style="left:958px;top:19px" width="14" height="14"><path d="M2 11h10L10.5 9V6a3.5 3.5 0 0 0-7 0v3z" fill="#6a6a6a"/><circle cx="10" cy="4" r="2.2" fill="#2a86d8"/></svg>
<svg class="a" style="left:980px;top:19px" width="13" height="13"><circle cx="6.5" cy="6.5" r="6.2" fill="#666"/><text x="6.5" y="10" font-size="9" font-family="Liberation Sans" font-weight="bold" fill="#eee" text-anchor="middle">?</text></svg>
<svg class="a" style="left:1003px;top:17px" width="17" height="17"><circle cx="8.5" cy="8.5" r="8" fill="#fff"/><path d="M2 8C5 4 9 3 14 6L15 10C12 9 10 12 7 13C5 11 3 10 2 8z" fill="#1662b8"/></svg>

<!-- TOOLBAR -->
<div class="a" style="left:0;top:36px;width:1024px;height:56px;background:#f2f2f2"></div>
<div class="a" style="left:0;top:91px;width:1024px;height:1px;background:#d8d8d8"></div>
<div class="a" style="left:8px;top:44px;width:73px;height:41px;border:1px solid #dadada;border-radius:3px;background:#f2f2f2"></div>
<div class="a t w" style="left:30px;top:60px;font-size:8px;color:#333;font-weight:bold;transform:scaleX(0.938)"><span class="j">デザイン</span> <span style="font-size:6px">▼</span></div>
<!-- tabs -->
<div class="a t w" style="left:100px;top:41px;font-size:8.5px;color:#1f8fcf;transform:scaleX(0.786)"><span class="j">ソリッド</span></div>
<div class="a" style="left:93px;top:50px;width:37px;height:2px;background:#1a8bc9"></div>
<div class="a t w" style="left:152px;top:41px;font-size:8.5px;color:#444;transform:scaleX(0.729)"><span class="j">サーフェス</span></div>
<div class="a t w" style="left:207px;top:41px;font-size:8.5px;color:#444;transform:scaleX(0.750)"><span class="j">メッシュ</span></div>
<div class="a t w" style="left:259px;top:41px;font-size:8.5px;color:#444;transform:scaleX(0.778)"><span class="j">シート</span> <span class="j">メタル</span></div>
<div class="a t w" style="left:325px;top:41px;font-size:8.5px;color:#444;transform:scaleX(0.762)"><span class="j">プラスチック</span></div>
<div class="a t w" style="left:386px;top:41px;font-size:8.5px;color:#444;transform:scaleX(0.745)"><span class="j">ユーティリティ</span></div>
<div class="a t w" style="left:452px;top:41px;font-size:8.5px;color:#444;transform:scaleX(1.071)"><span class="j">管理</span></div>
<!-- group labels -->
<div class="a t w" style="left:177px;top:81px;font-size:8px;color:#555;transform:scaleX(1.026)"><span class="j">作成</span> <span style="font-size:5px">▼</span></div>
<div class="a t w" style="left:398px;top:81px;font-size:8px;color:#555;transform:scaleX(1.105)"><span class="j">修正</span> <span style="font-size:5px">▼</span></div>
<div class="a t w" style="left:558px;top:81px;font-size:8px;color:#555;transform:scaleX(0.878)"><span class="j">アセンブリ</span> <span style="font-size:5px">▼</span></div>
<div class="a t w" style="left:631px;top:81px;font-size:8px;color:#555;letter-spacing:-0.3px;transform:scaleX(0.842)"><span class="j">コンフィギュレーション</span> <span style="font-size:5px">▼</span></div>
<div class="a t w" style="left:722px;top:81px;font-size:8px;color:#555;transform:scaleX(1.053)"><span class="j">構築</span> <span style="font-size:5px">▼</span></div>
<div class="a t w" style="left:776px;top:81px;font-size:8px;color:#555;transform:scaleX(1.105)"><span class="j">検査</span> <span style="font-size:5px">▼</span></div>
<div class="a t w" style="left:841px;top:81px;font-size:8px;color:#555;transform:scaleX(1.032)"><span class="j">挿入</span> <span style="font-size:5px">▼</span></div>
<div class="a t w" style="left:908px;top:81px;font-size:8px;color:#555;transform:scaleX(1.079)"><span class="j">選択</span> <span style="font-size:5px">▼</span></div>
<!-- separators -->
<div class="a" style="left:291px;top:55px;width:1px;height:31px;background:#dedede"></div>
<div class="a" style="left:528px;top:55px;width:1px;height:31px;background:#dedede"></div>
<div class="a" style="left:621px;top:55px;width:1px;height:31px;background:#dedede"></div>
<div class="a" style="left:701px;top:55px;width:1px;height:31px;background:#dedede"></div>
<div class="a" style="left:766px;top:55px;width:1px;height:31px;background:#dedede"></div>
<div class="a" style="left:805px;top:55px;width:1px;height:31px;background:#dedede"></div>
<div class="a" style="left:898px;top:55px;width:1px;height:31px;background:#dedede"></div>
<!-- icons -->
<svg class="a" style="left:91px;top:54px" width="200" height="24" viewBox="91 54 200 24">
 <!-- sketch -->
 <rect x="92.5" y="55.5" width="18" height="18" fill="none" stroke="#777" stroke-width="0.8" stroke-dasharray="2 1"/>
 <path d="M95 71 L96 58 Q106 58 108 62" fill="none" stroke="#555" stroke-width="1"/>
 <path d="M105 66h8v3h-8zM107.5 63.5h3v8h-3z" fill="#2aa84a"/>
 <!-- revolve -->
 <path d="M120 66 Q130 56 141 66 L141 72 Q130 64 120 72z" fill="#4a9fe0"/>
 <path d="M120 66 Q130 60 141 66 Q130 58 120 66z" fill="#8cc8f0"/>
 <path d="M122 60 Q130 54 139 58" fill="none" stroke="#444" stroke-width="0.8"/>
 <ellipse cx="138" cy="69" rx="3" ry="3" fill="#fff" stroke="#888" stroke-width="0.5"/>
 <!-- hole -->
 <path d="M149 58l3-3h18v17l-3 3h-18z" fill="#d4d4d4" stroke="#888" stroke-width="0.6"/>
 <rect x="149" y="58" width="18" height="17" fill="#ececec" stroke="#888" stroke-width="0.6"/>
 <circle cx="158" cy="66.5" r="6" fill="#5aa8e0" stroke="#555" stroke-width="0.8"/>
 <path d="M154 64a5 5 0 0 1 7-3" stroke="#fff" stroke-width="1.3" fill="none"/>
 <!-- extrude -->
 <path d="M178 59l3-3h13v17l-3 3h-13z" fill="#3b8fd6"/>
 <rect x="178" y="59" width="13" height="17" fill="#5aaae8"/>
 <path d="M197 76V56M195 58l2-3 2 3" stroke="#333" stroke-width="0.8" fill="none"/>
 <!-- pattern -->
 <rect x="206" y="56" width="5" height="5" fill="#fff" stroke="#555" stroke-width="0.6"/>
 <rect x="220" y="56" width="5" height="5" fill="#4a9fe0"/>
 <rect x="206" y="70" width="5" height="5" fill="#4a9fe0"/>
 <rect x="220" y="70" width="5" height="5" fill="#4a9fe0"/>
 <path d="M211 58.5h9M208.5 61v9M211 72.5h9" stroke="#555" stroke-width="0.6"/>
 <!-- purple -->
 <path d="M236 60l5-4h12v15l-5 5h-12z" fill="#9a5ad8"/>
 <path d="M236 60h12v16h-12z" fill="#b27aee"/>
 <path d="M242 60v16M236 68h12" stroke="#8048c0" stroke-width="0.6"/>
 <circle cx="251" cy="59" r="3.5" fill="#f8b820"/>
 <path d="M251 53v2M251 63v2M245 59h2M255 59h2M247 55l1.4 1.4M253.6 61.6l1.4 1.4M255 55l-1.4 1.4M247 63l1.4-1.4" stroke="#f8b820" stroke-width="0.9"/>
 <!-- sheet metal -->
 <path d="M263 56h22l-4 14h-14z" fill="#4a9fe0"/>
 <path d="M263 56l4 14h14l4-14-5 4h-12z" fill="#2f82c8" opacity="0.5"/>
 <circle cx="274" cy="71" r="5.5" fill="#fff" stroke="#555" stroke-width="0.8"/>
</svg>
<svg class="a" style="left:298px;top:54px" width="228" height="24" viewBox="298 54 228 24">
 <!-- press pull -->
 <path d="M300 60l3-3h6v17h-6l-3 2z" fill="#d8d8d8" stroke="#888" stroke-width="0.5"/>
 <path d="M303 57h7v18h-7z" fill="#ececec" stroke="#888" stroke-width="0.5"/>
 <path d="M307 56h5v18h-5z" fill="#4a9fe0"/>
 <path d="M312 65h6M316 63l2 2-2 2" stroke="#333" stroke-width="0.9" fill="none"/>
 <!-- fillet -->
 <path d="M328 62l5-5h8a9 9 0 0 1 9 9v9h-22z" fill="#e2e2e2" stroke="#888" stroke-width="0.6"/>
 <path d="M341 57a9 9 0 0 1 9 9l-3 3a9 9 0 0 0-7-8z" fill="#4a9fe0"/>
 <!-- shell -->
 <path d="M357 58l3-3h18v17l-3 3h-18z" fill="#d4d4d4" stroke="#888" stroke-width="0.6"/>
 <rect x="357" y="58" width="18" height="17" fill="#ececec" stroke="#888" stroke-width="0.6"/>
 <path d="M360 61h12v11h-12z" fill="#fff"/>
 <path d="M361 64h5v5h5v3h-10z" fill="#4a9fe0"/>
 <!-- combine -->
 <path d="M393 56h13v10h-5v7h-14v-10h6z" fill="#3b8fd6"/>
 <path d="M385 65h13v11h-13z" fill="#4a9fe0"/>
 <path d="M393 57h12v9h-7v-3h-5z" fill="#5aaae8"/>
 <!-- split -->
 <path d="M416 58l3-2h17v6l-3 2h-17z" fill="#4a9fe0"/>
 <path d="M416 66h17l3-2v6" fill="none" stroke="#4a9fe0" stroke-width="1.5"/>
 <path d="M416 68h17v7h-17z" fill="#e0e0e0" stroke="#888" stroke-width="0.5"/>
 <path d="M433 68l3-2v6l-3 3z" fill="#ccc"/>
 <!-- move -->
 <path d="M454 56v20M444 66h20" stroke="#222" stroke-width="1.4"/>
 <path d="M454 54l-3 4h6zM454 78l-3-4h6zM442 66l4-3v6zM466 66l-4-3v6z" fill="#222"/>
 <!-- chamfer -->
 <path d="M473 62l5-5h5l10 9v9h-20z" fill="#e2e2e2" stroke="#888" stroke-width="0.6"/>
 <path d="M483 57l10 9-2 3-10-9z" fill="#4a9fe0"/>
 <!-- replace face -->
 <rect x="501" y="56" width="20" height="19" fill="#4a9fe0"/>
 <rect x="501" y="62" width="12" height="13" fill="#fafafa" stroke="#888" stroke-width="0.5"/>
</svg>
<svg class="a" style="left:534px;top:52px" width="230" height="26" viewBox="534 52 230 26">
 <!-- assembly new comp -->
 <rect x="536" y="60" width="9" height="8" fill="#4a9fe0"/>
 <rect x="536" y="68" width="9" height="8" fill="#e4e4e4" stroke="#999" stroke-width="0.5"/>
 <rect x="545" y="68" width="10" height="8" fill="#e4e4e4" stroke="#999" stroke-width="0.5"/>
 <rect x="545" y="62" width="8" height="6" fill="#cfd8e0"/>
 <circle cx="553" cy="59" r="3" fill="#f8b820"/>
 <path d="M553 54v1.5M553 62.5v1.5M548 59h1.5M556.5 59h1.5" stroke="#f8b820" stroke-width="0.9"/>
 <!-- joint -->
 <path d="M566 62l4-4h3v14l-4 3h-3z" fill="#c8c8c8" stroke="#777" stroke-width="0.6"/>
 <path d="M576 60l4-2h3v16l-3 1-4-2z" fill="#d4d4d4" stroke="#777" stroke-width="0.6"/>
 <!-- table -->
 <rect x="594" y="56" width="6" height="5" fill="#4a9fe0"/>
 <rect x="597" y="61" width="6" height="5" fill="#fff" stroke="#666" stroke-width="0.5"/>
 <rect x="602" y="62" width="14" height="14" fill="#fff" stroke="#555" stroke-width="0.8"/>
 <path d="M602 65h14M602 68h14M602 71h14M602 74h14M607 62v14" stroke="#666" stroke-width="0.6"/>
 <!-- config 1 -->
 <path d="M636 58h16l3 3v14h-19z" fill="#e8e8e8" stroke="#bbb" stroke-width="0.5"/>
 <circle cx="651" cy="59.5" r="5" fill="#1a88e0"/>
 <path d="M651 56.5l-2.5 3h1.8v3h1.4v-3h1.8z" fill="#fff"/>
 <path d="M648 68h9M648 72h9" stroke="#999" stroke-width="0.6"/>
 <!-- config 2 -->
 <rect x="665" y="57" width="19" height="19" fill="#efefef" stroke="#aaa" stroke-width="0.6"/>
 <path d="M665 61h19M665 65h19M665 69h19M665 73h19M671 57v19M677 57v19" stroke="#bbb" stroke-width="0.5"/>
 <circle cx="680" cy="59.5" r="5" fill="#1a88e0"/>
 <path d="M680 56.5l-2.5 3h1.8v3h1.4v-3h1.8z" fill="#fff"/>
 <!-- construct plane -->
 <path d="M710 60l5-4h4v18l-5 2h-4z" fill="#d8d8d8" stroke="#888" stroke-width="0.5"/>
 <path d="M714 58l5-2v18l-5 2z" fill="#3bb85a"/>
 <path d="M724 60l6-3v16l-6 3z" fill="#e88a50"/>
 <!-- construct axis XYZ -->
 <path d="M748.5 56v10M740 65.5h17" stroke="#7a6a60" stroke-width="0.9"/>
 <path d="M748.5 60l5 5.5-5 5.5-5-5.5z" fill="#f0a070" opacity="0.85"/>
 <circle cx="748.5" cy="65.5" r="1.8" fill="none" stroke="#c05a30" stroke-width="0.7"/>
 <text x="754" y="76" font-family="Liberation Sans" font-size="7.5" font-weight="bold" fill="#555" text-anchor="middle" transform="skewX(-8)" transform-origin="754 76">XYZ</text>
</svg>
<svg class="a" style="left:770px;top:50px" width="170" height="30" viewBox="770 50 170 30">
 <!-- measure -->
 <path d="M777 62h19" stroke="#444" stroke-width="0.7"/>
 <path d="M777 59v6M796 59v6" stroke="#444" stroke-width="0.7"/>
 <rect x="777" y="66" width="19" height="4" fill="#f0a020"/>
 <!-- link -->
 <path d="M816 60l3-3h15v14l-3 3h-15z" fill="#d8d8d8" stroke="#888" stroke-width="0.5"/>
 <rect x="816" y="60" width="15" height="15" fill="#ececec" stroke="#999" stroke-width="0.5"/>
 <path d="M813 57h8M818 54l3 3-3 3" stroke="#1a80d0" stroke-width="1.8" fill="none"/>
 <path d="M826 73l6-6" stroke="#333" stroke-width="3"/>
 <path d="M826 73l6-6" stroke="#ececec" stroke-width="1.2"/>
 <!-- insert mcmaster -->
 <rect x="844" y="56" width="17" height="5" fill="#5aaae8"/>
 <rect x="848" y="61" width="9" height="14" fill="#4a9fe0"/>
 <path d="M853 70h10v3h-10zM856.5 66.5h3v10h-3z" fill="#2aa84a"/>
 <!-- canvas -->
 <rect x="871" y="55" width="20" height="20" fill="#6abaf0"/>
 <path d="M871 75v-7l6-5 5 4 3-2 6 5v5z" fill="#2a7cc0"/>
 <circle cx="886" cy="60" r="2.2" fill="#fff"/>
 <!-- select -->
 <rect x="906" y="53" width="26" height="25" fill="#1a8ed8"/>
 <rect x="909" y="56" width="19" height="17" fill="none" stroke="#8ad0f8" stroke-width="0.7" stroke-dasharray="1.5 1"/>
 <path d="M920 65l0 10 2.5-2.5 2 4 1.5-.8-2-4H927z" fill="#fff"/>
</svg>

<!-- TIMELINE -->
<div class="a" style="left:0;top:512px;width:1024px;height:33px;background:#f2f2f2;border-top:1px solid #ececec"></div>
<svg class="a" style="left:0;top:512px" width="1024" height="33" viewBox="0 512 1024 33">
<path d="M7.5 524v8" stroke="#444" stroke-width="1.3"/><path d="M14 524l-5.5 4 5.5 4z" fill="#444"/>
<path d="M30 524l-5.5 4 5.5 4z" fill="#444"/><path d="M29 525v6" stroke="#eee" stroke-width="0.6"/>
<path d="M40.5 523l7 5-7 5z" fill="#444"/>
<path d="M57 524l5.5 4-5.5 4z" fill="#444"/><path d="M58 525v6" stroke="#eee" stroke-width="0.6"/>
<path d="M74 524l5.5 4-5.5 4z" fill="#444"/><path d="M80.5 524v8" stroke="#444" stroke-width="1.3"/>
<g fill="none" stroke="#666" stroke-width="0.7"><rect x="97" y="526.5" width="3" height="3"/><rect x="101" y="526.5" width="3" height="3"/><rect x="105" y="526.5" width="3" height="3"/></g>
<g fill="none" stroke="#666" stroke-width="0.7"><rect x="113" y="526.5" width="3" height="3"/><rect x="117" y="526.5" width="3" height="3"/><rect x="121" y="526.5" width="3" height="3"/></g>
<rect x="129" y="522" width="10" height="10" fill="#5aa8e6"/><rect x="129" y="527" width="5" height="5" fill="#fff" stroke="#888" stroke-width="0.5"/>
<path d="M150 523v10M145 528h10" stroke="#333" stroke-width="1"/><path d="M150 522l-2 2h4zM150 534l-2-2h4zM144 528l2-2v4zM156 528l-2-2v4z" fill="#333"/>
<g fill="none" stroke="#666" stroke-width="0.7"><rect x="161" y="526.5" width="3" height="3"/><rect x="165" y="526.5" width="3" height="3"/><rect x="169" y="526.5" width="3" height="3"/></g>
<rect x="177" y="522" width="10" height="10" fill="#5aa8e6"/><rect x="177" y="527" width="5" height="5" fill="#fff" stroke="#888" stroke-width="0.5"/>
<path d="M198 523v10M193 528h10" stroke="#333" stroke-width="1"/><path d="M198 522l-2 2h4zM198 534l-2-2h4zM192 528l2-2v4zM204 528l-2-2v4z" fill="#333"/>
<path d="M214 523v10M209 528h10" stroke="#333" stroke-width="1"/><path d="M214 522l-2 2h4zM214 534l-2-2h4zM208 528l2-2v4zM220 528l-2-2v4z" fill="#333"/>
<rect x="225" y="522" width="3" height="11" fill="#fff" stroke="#888" stroke-width="0.5"/><rect x="228" y="522" width="7" height="5" fill="#5aa8e6"/>
<path d="M246 523v10M241 528h10" stroke="#333" stroke-width="1"/><path d="M246 522l-2 2h4zM246 534l-2-2h4zM240 528l2-2v4zM252 528l-2-2v4z" fill="#333"/>
<path d="M262 523v10M257 528h10" stroke="#333" stroke-width="1"/><path d="M262 522l-2 2h4zM262 534l-2-2h4zM256 528l2-2v4zM268 528l-2-2v4z" fill="#333"/>
<path d="M278 523v10M273 528h10" stroke="#333" stroke-width="1"/><path d="M278 522l-2 2h4zM278 534l-2-2h4zM272 528l2-2v4zM284 528l-2-2v4z" fill="#333"/>
<path d="M294 523v10M289 528h10" stroke="#333" stroke-width="1"/><path d="M294 522l-2 2h4zM294 534l-2-2h4zM288 528l2-2v4zM300 528l-2-2v4z" fill="#333"/>
<path d="M310 523v10M305 528h10" stroke="#333" stroke-width="1"/><path d="M310 522l-2 2h4zM310 534l-2-2h4zM304 528l2-2v4zM316 528l-2-2v4z" fill="#333"/>
<path d="M326 523v10M321 528h10" stroke="#333" stroke-width="1"/><path d="M326 522l-2 2h4zM326 534l-2-2h4zM320 528l2-2v4zM332 528l-2-2v4z" fill="#333"/>
<path d="M342 523v10M337 528h10" stroke="#333" stroke-width="1"/><path d="M342 522l-2 2h4zM342 534l-2-2h4zM336 528l2-2v4zM348 528l-2-2v4z" fill="#333"/>
<g fill="none" stroke="#666" stroke-width="0.7"><rect x="353" y="526.5" width="3" height="3"/><rect x="357" y="526.5" width="3" height="3"/><rect x="361" y="526.5" width="3" height="3"/></g>
<rect x="99" y="535.5" width="6.5" height="6.5" fill="#777"/><rect x="100.5" y="537" width="3.5" height="3.5" fill="#e0e0e0"/><path d="M102.25 537v3.5M100.5 538.75h3.5" stroke="#777" stroke-width="0.7"/>
<rect x="115" y="535.5" width="6.5" height="6.5" fill="#777"/><rect x="116.5" y="537" width="3.5" height="3.5" fill="#e0e0e0"/><path d="M118.25 537v3.5M116.5 538.75h3.5" stroke="#777" stroke-width="0.7"/>
<rect x="163" y="535.5" width="6.5" height="6.5" fill="#777"/><rect x="164.5" y="537" width="3.5" height="3.5" fill="#e0e0e0"/><path d="M166.25 537v3.5M164.5 538.75h3.5" stroke="#777" stroke-width="0.7"/>
<path d="M104 539.3H367" stroke="#c4c4c4" stroke-width="0.8"/>
<rect x="365.5" y="519" width="3" height="22" fill="#444"/><path d="M363 517h8v3l-4 3-4-3z" fill="#444"/>
<circle cx="1010" cy="528" r="4.5" fill="none" stroke="#777" stroke-width="2.5" stroke-dasharray="1.6 1.1"/><circle cx="1010" cy="528" r="3.4" fill="#777"/><circle cx="1010" cy="528" r="1.4" fill="#f0f0f0"/>
</svg>
<!-- TASKBAR -->
<div class="a" style="left:0;top:545px;width:1024px;height:31px;background:linear-gradient(90deg,#ddd6e6 0%,#e4d9e6 30%,#ecdde3 60%,#f1dee1 100%)"></div>
<div class="a" style="left:0;top:545px;width:1024px;height:1px;background:#d9cdd3"></div>
<div class="a" style="left:38px;top:551px;width:146px;height:20px;border-radius:10px;background:#f4eff6;border:1px solid #e4dde8"></div>
<div class="a" style="left:481px;top:548px;width:117px;height:27px;border-radius:4px;background:rgba(255,255,255,0.55)"></div>
<svg class="a" style="left:0;top:544px" width="1024" height="32" viewBox="0 544 1024 32">
<g fill="#1a78d8"><rect x="14" y="553" width="7.2" height="7.2"/><rect x="22" y="553" width="7.2" height="7.2"/><rect x="14" y="561" width="7.2" height="7.2"/><rect x="22" y="561" width="7.2" height="7.2"/></g>
<g fill="#48a8f0" opacity="0.6"><rect x="14" y="553" width="7.2" height="3"/><rect x="22" y="553" width="7.2" height="3"/></g>
<circle cx="50" cy="560" r="3.3" fill="none" stroke="#222" stroke-width="1.2"/><path d="M52.5 562.5l2.5 2.5" stroke="#222" stroke-width="1.3"/>
<path d="M150 563q8-4 14-1t12 0" stroke="#c86080" stroke-width="0.8" fill="none"/>
<circle cx="154" cy="562" r="1.8" fill="#f0a0b8"/>
<circle cx="160" cy="560" r="1.8" fill="#f0a0b8"/>
<circle cx="166" cy="561" r="1.8" fill="#f0a0b8"/>
<circle cx="171" cy="562" r="1.8" fill="#f0a0b8"/>
<circle cx="176" cy="561" r="1.8" fill="#f0a0b8"/>
<rect x="179" y="560" width="4" height="2" fill="#333"/>
<rect x="196.5" y="554" width="11.5" height="10" fill="#f4f4f2"/><rect x="193" y="557.5" width="12" height="10.5" fill="#202020"/><rect x="196.5" y="557.5" width="8.5" height="7" fill="#b4b4ac"/>
<defs><linearGradient id="gMon" x1="0" x2="1" y1="0" y2="1"><stop offset="0" stop-color="#30c0e0"/><stop offset="1" stop-color="#1a70c0"/></linearGradient></defs><rect x="223" y="554.5" width="15" height="10" rx="0.8" fill="url(#gMon)"/><path d="M230.5 564.5v2M227.5 567h6" stroke="#555" stroke-width="1"/>
<path d="M251 555h6l1.5 2H268v9h-17z" fill="#e8b820"/><rect x="251" y="558" width="17" height="8" fill="#f8d048"/><rect x="256" y="572" width="5" height="1.5" rx="0.7" fill="#777"/>
<rect x="369" y="553" width="12" height="15" rx="1" fill="#3a4a5a"/><rect x="371" y="555" width="8" height="3" fill="#a8c8e8"/><g fill="#d0d8e0"><rect x="371" y="559.5" width="2" height="2"/><rect x="374" y="559.5" width="2" height="2"/><rect x="377" y="559.5" width="2" height="2"/><rect x="371" y="563" width="2" height="2"/><rect x="374" y="563" width="2" height="2"/><rect x="377" y="563" width="2" height="2"/></g>
<rect x="400" y="554" width="12" height="14" rx="1" fill="#2a8ad8"/><rect x="401.5" y="556" width="9" height="11" fill="#eaf2fa"/><path d="M402.5 559h7M402.5 561.5h7M402.5 564h7" stroke="#4a9ad8" stroke-width="0.8"/><path d="M402 553.5v3M405 553.5v3M408 553.5v3" stroke="#333" stroke-width="0.8"/>
<path d="M428 555h10v4M433 559v9M433 563h10" stroke="#1a88d0" stroke-width="1.6" fill="none"/><path d="M428 555v5h4" stroke="#333" stroke-width="0.8" fill="none"/>
<circle cx="464.5" cy="561" r="8" fill="#1a9ad8"/><path d="M458 563q2-7 9-6 5 1 5 5h-9q1 4 7 3-3 4-8 3-4-2-4-5z" fill="#48d070"/><path d="M461 562q3-4 8-2" stroke="#fff" stroke-width="1.5" fill="none"/>
<rect x="487" y="552" width="14" height="15" rx="2" fill="#e8741c"/><rect x="487" y="562" width="14" height="5" fill="#b04a0c"/><text x="494" y="561" font-family="Liberation Sans" font-size="8" font-weight="bold" fill="#fff" text-anchor="middle">F</text><rect x="488" y="573" width="12" height="2" rx="1" fill="#3a8ad0"/>
<circle cx="738" cy="558" r="4" fill="#f8b830"/><ellipse cx="741" cy="563" rx="8" ry="4.5" fill="#9ac0e8"/><ellipse cx="744" cy="561" rx="4" ry="3.5" fill="#b0d0f0"/>
<path d="M841 563l3-3 3 3" stroke="#222" stroke-width="1" fill="none"/>
<path d="M860 564h9a2.5 2.5 0 0 0 0-5 3.5 3.5 0 0 0-6.5-0.5 2.5 2.5 0 0 0-2.5 5.5z" fill="none" stroke="#333" stroke-width="1"/>
<text x="887" y="566" font-family="Liberation Sans" font-size="11" fill="#333" text-anchor="middle">A</text>
<path d="M902 559q5-4 10 0M903.5 561q3.5-2.5 7 0M905 563q2-1.5 4 0" stroke="#222" stroke-width="0.9" fill="none"/><circle cx="907" cy="564.5" r="0.8" fill="#222"/>
<path d="M919 559h2l3-3v10l-3-3h-2z" fill="none" stroke="#222" stroke-width="0.9"/><path d="M926 558q2 3 0 6M928 557q3 4 0 8" stroke="#222" stroke-width="0.8" fill="none"/>
<path d="M936 557v7h10v-5l-2-2h-3" stroke="#222" stroke-width="1" fill="none"/><path d="M937 556l2-2" stroke="#222" stroke-width="0.9"/>
</svg>
<div class="a t w" style="left:63px;top:557px;font-size:9px;color:#555;transform:scaleX(1.429)"><span class="j">検索</span></div>
<div class="a t w" style="left:273px;top:557.5px;font-size:8.5px;color:#222;transform:scaleX(0.837)">2025.03 - <span class="j">エクスプローラー</span></div>
<div class="a t w" style="left:507px;top:557.5px;font-size:8.5px;color:#222;transform:scaleX(0.910)">2025.03.09_<span class="j">卵型おはな</span> v</div>
<div class="a t w" style="left:752px;top:552.5px;font-size:7.5px;color:#222;transform:scaleX(1.000)">4°C</div>
<div class="a t w" style="left:752px;top:562.5px;font-size:7.5px;color:#444;transform:scaleX(1.143)"><span class="j">くもり時々晴れ</span></div>
<div class="a t w" style="left:992px;top:552px;font-size:8px;color:#222;transform:scaleX(1.128)">22:49</div>
<div class="a t w" style="left:956px;top:562.5px;font-size:8px;color:#222;transform:scaleX(1.140)">2025/03/09 (<span class="j">日</span>)</div>
<script>(function(){var W=[22.0,85.0,51.0,56.0,5.0,6.0,6.0,16.0,41.0,49.5,15.0,92.0,51.0,15.0,19.0,15.0,16.0,28.0,22.0,45.0,47.0,15.0,26.0,20.0,270.0,95.0,30.0,22.0,25.5,21.0,35.0,32.0,36.5,15.0,19.5,21.0,32.5,61.0,20.0,21.0,19.6,20.5,20.0,82.0,85.5,13.0,48.0,20.3,57.0];var e=document.querySelectorAll(".w");for(var i=0;i<e.length&&i<W.length;i++){var el=e[i];var old=el.style.transform;el.style.transform="none";var w=el.getBoundingClientRect().width;el.style.transform=w>0?"scaleX("+(W[i]/w)+")":old;}})();</script>
</body></html>
